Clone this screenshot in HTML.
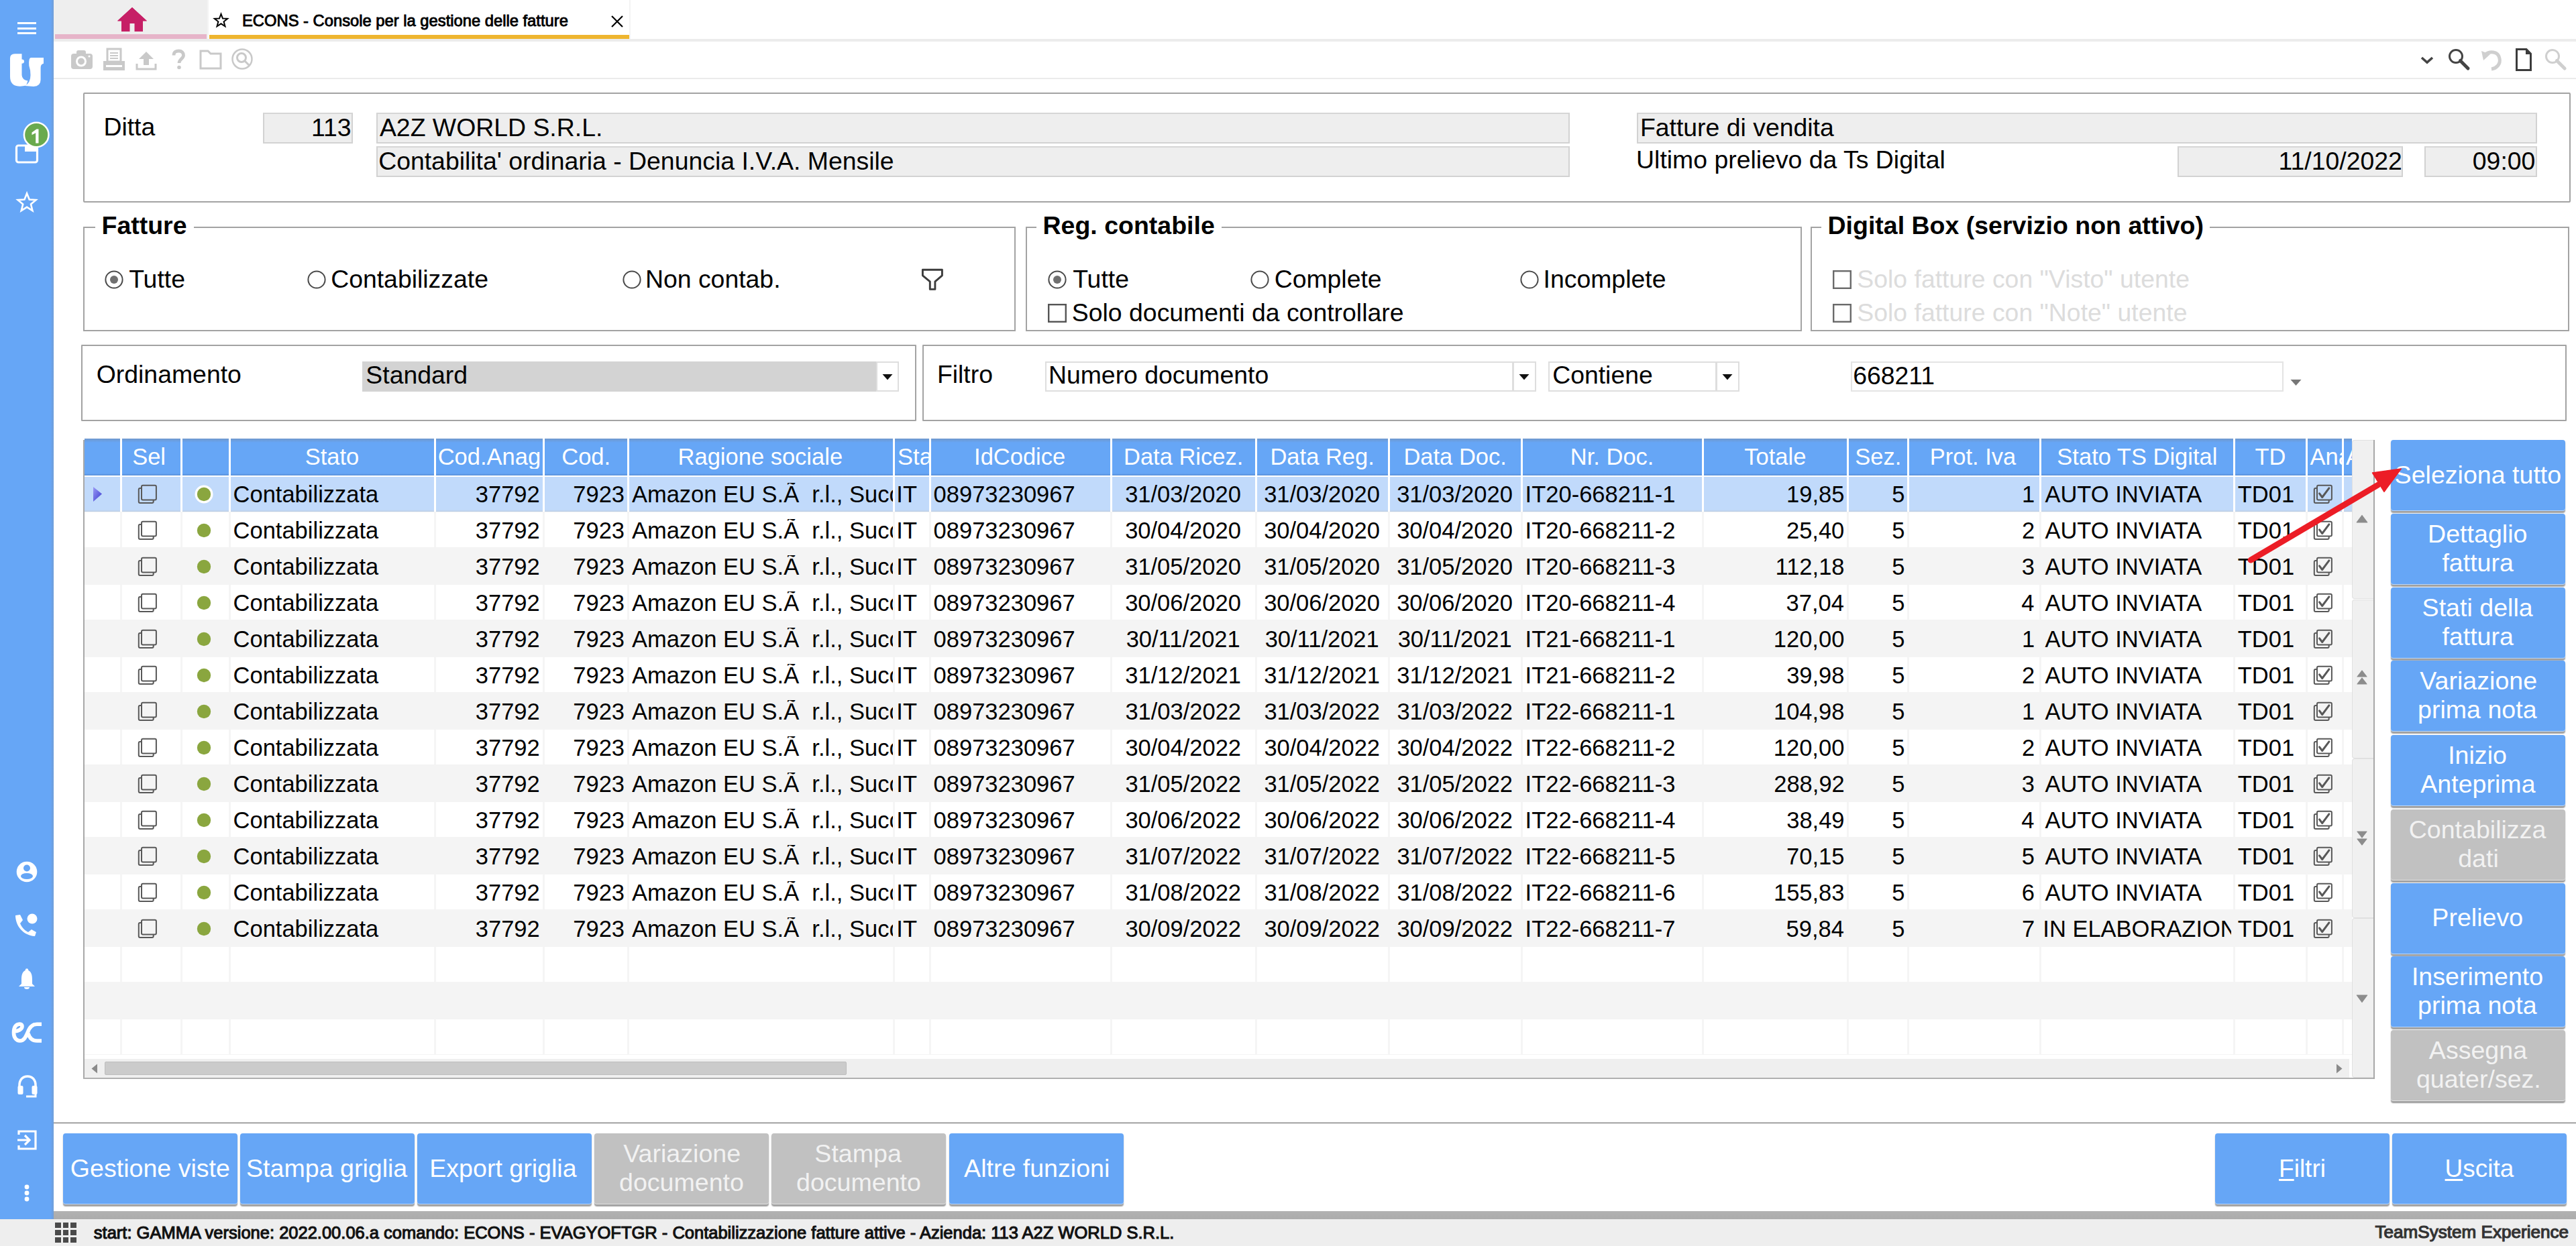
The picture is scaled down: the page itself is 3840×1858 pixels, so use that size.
<!DOCTYPE html>
<html><head><meta charset="utf-8"><title>ECONS</title>
<style>
html,body{margin:0;padding:0;}
body{width:3840px;height:1858px;position:relative;overflow:hidden;background:#fff;font-family:"Liberation Sans", sans-serif;}
.t{position:absolute;white-space:pre;}
.r{position:absolute;box-sizing:border-box;}
</style></head><body>

<div class="r" style="left:0.00px;top:0.00px;width:80.00px;height:1818.00px;background:#66a6f6;"></div>
<div class="r" style="left:75.00px;top:0.00px;width:5.00px;height:1818.00px;background:linear-gradient(to right, rgba(100,165,245,0), rgba(120,150,190,0.55));"></div>
<div class="r" style="left:26.00px;top:33.00px;width:28.00px;height:3.00px;background:#fff;"></div>
<div class="r" style="left:26.00px;top:40.50px;width:28.00px;height:3.00px;background:#fff;"></div>
<div class="r" style="left:26.00px;top:48.00px;width:28.00px;height:3.00px;background:#fff;"></div>
<svg class="r" style="left:0px;top:70px;" width="80" height="70" viewBox="0 0 80 70"><g transform="translate(0,-70)" fill="#fff">
<path d="M15,87 Q15,80.3 22,80.3 L32.5,80.3 L32.5,88.5 Q36,88.5 36,91.5 Q36,94.7 32.5,94.7 L32.5,112 Q33,119 41.5,120.5 L39,127.5 Q33,129 27,128.5 Q15,127.5 15,114 Z"/>
<path d="M46,86 L65,86 L65,94.7 Q60.6,95.5 60.6,101 L60.6,119 Q60.6,128.5 50,129 L37.5,128 Q45.5,123 45.5,112 Q45.5,104 43.3,98 Q42.5,86 46,86 Z"/>
</g></svg>
<svg class="r" style="left:18px;top:178px;" width="62" height="72" viewBox="0 0 62 72"><rect x="6.5" y="39" width="31" height="25" rx="3" ry="3" fill="none" stroke="#fff" stroke-width="3.2"/>
<rect x="19" y="38" width="20" height="10" fill="#fff"/>
<circle cx="36.2" cy="23" r="18.3" fill="#6aaa4e" stroke="#fff" stroke-width="2.5"/>
<path d="M29.5,19.5 L36.5,14.5 L39.5,14.5 L39.5,35.4 L35.2,35.4 L35.2,20.3 L29.5,23.2 Z" fill="#fff"/></svg>
<svg class="r" style="left:20px;top:282px;" width="40" height="40" viewBox="0 0 40 40"><polygon points="20.10,6.40 23.74,15.58 33.61,16.21 26.00,22.52 28.45,32.09 20.10,26.80 11.75,32.09 14.20,22.52 6.59,16.21 16.46,15.58" fill="none" stroke="#fff" stroke-width="2.6" stroke-linejoin="miter"/></svg>
<svg class="r" style="left:24px;top:1284px;" width="32" height="32" viewBox="0 0 32 32"><circle cx="16" cy="16" r="15.3" fill="#fff"/>
<circle cx="16" cy="10.5" r="5" fill="#66a6f6"/>
<ellipse cx="16" cy="22.5" rx="9" ry="4.6" fill="#66a6f6"/></svg>
<svg class="r" style="left:20px;top:1360px;" width="40" height="40" viewBox="0 0 40 40"><circle cx="28" cy="10" r="7.5" fill="#fff"/>
<path d="M3 5 C3 20 14 35 32 36 L34 30 L27 26 L22 30 C16 27 12 22 10 17 L14 12 L10 4 Z" fill="#fff"/></svg>
<svg class="r" style="left:26px;top:1443px;" width="28" height="34" viewBox="0 0 28 34"><path d="M14 3 C7 5 6 11 6 18 L6 24 L2 28 L26 28 L22 24 L22 18 C22 11 21 5 14 3 Z" fill="#fff"/>
<circle cx="14" cy="3.5" r="2.2" fill="#fff"/><path d="M10 29 a4 3 0 0 0 8 0 Z" fill="#fff"/></svg>
<svg class="r" style="left:0px;top:1510px;" width="80" height="60" viewBox="0 0 80 60"><path d="M21.5,28 C27,27.5 33,25 33,20.5 C33,17.5 30.5,16.8 28,17.2 C23,18 20.5,23 20.5,30 C20.5,37.5 24.5,42 29.5,42 C36,42 38.5,36 41.5,29 C44,22 48,17.3 55,17.3 L62,17.3" fill="none" stroke="#fff" stroke-width="5.6"/>
<path d="M42,31 C44,38 48,42 55,42 L62,42" fill="none" stroke="#fff" stroke-width="5.6"/></svg>
<svg class="r" style="left:24px;top:1601px;" width="34" height="40" viewBox="0 0 34 40"><path d="M5 22 L5 17 C5 9 10 4 17 4 C24 4 29 9 29 17 L29 22" fill="none" stroke="#fff" stroke-width="3.5"/>
<rect x="2.5" y="18" width="8" height="13" rx="2" fill="#fff"/><rect x="23.5" y="18" width="8" height="13" rx="2" fill="#fff"/>
<path d="M29 29 L29 34 L15 34" fill="none" stroke="#fff" stroke-width="3"/></svg>
<svg class="r" style="left:24px;top:1683px;" width="34" height="34" viewBox="0 0 34 34"><path d="M4 9 L4 4 L29 4 L29 30 L4 30 L4 25" fill="none" stroke="#fff" stroke-width="3.2"/>
<path d="M2 17 L19 17 M13 10 L20 17 L13 24" fill="none" stroke="#fff" stroke-width="3.2"/></svg>
<svg class="r" style="left:36px;top:1766px;" width="8" height="8" viewBox="0 0 8 8"><circle cx="4" cy="4" r="3.4" fill="#fff"/></svg>
<svg class="r" style="left:36px;top:1775px;" width="8" height="8" viewBox="0 0 8 8"><circle cx="4" cy="4" r="3.4" fill="#fff"/></svg>
<svg class="r" style="left:36px;top:1784px;" width="8" height="8" viewBox="0 0 8 8"><circle cx="4" cy="4" r="3.4" fill="#fff"/></svg>
<div class="r" style="left:80.00px;top:0.00px;width:229.00px;height:58.00px;background:#eeeeee;"></div>
<div class="r" style="left:82.00px;top:51.00px;width:226.00px;height:7.00px;background:#e6b4c9;"></div>
<svg class="r" style="left:172px;top:8px;" width="50" height="42" viewBox="0 0 50 42"><polygon points="3,23 25,3 47,23 41,23 41,39 29,39 29,27 21,39 21,39 9,39 9,23" fill="#c61f66"/>
<polygon points="3,23.5 25,3 47,23.5" fill="#c61f66"/>
<rect x="9" y="22" width="32" height="17" fill="#c61f66"/>
<rect x="21.5" y="27" width="7" height="12" fill="#eeeeee"/></svg>
<div class="r" style="left:309.00px;top:0.00px;width:2.00px;height:58.00px;background:#f4f4f4;"></div>
<div class="r" style="left:312.00px;top:52.00px;width:626.00px;height:6.00px;background:#eeb52f;"></div>
<div class="r" style="left:938.00px;top:0.00px;width:2.00px;height:58.00px;background:#f3f3f3;"></div>
<div class="r" style="left:80.00px;top:58.00px;width:3760.00px;height:4.00px;background:#ececec;"></div>
<svg class="r" style="left:316px;top:17px;" width="28" height="26" viewBox="0 0 28 26"><polygon points="13.50,3.80 16.03,10.52 23.20,10.85 17.59,15.33 19.50,22.25 13.50,18.30 7.50,22.25 9.41,15.33 3.80,10.85 10.97,10.52" fill="none" stroke="#000" stroke-width="2" stroke-linejoin="miter"/></svg>
<div class="t" style="top:18.90px;font-size:23.75px;line-height:23.75px;height:23.75px;color:#000;left:361.04px;-webkit-text-stroke:0.9px #000;">ECONS - Console per la gestione delle fatture</div>
<svg class="r" style="left:908px;top:20px;" width="24" height="24" viewBox="0 0 24 24"><path d="M4 4 L20 20 M20 4 L4 20" stroke="#000" stroke-width="2.2"/></svg>
<div class="r" style="left:80.00px;top:116.00px;width:3760.00px;height:2.00px;background:#ebebeb;"></div>
<svg class="r" style="left:104px;top:72px;" width="36" height="34" viewBox="0 0 36 34"><rect x="2" y="8" width="32" height="23" rx="4" fill="#c9c9c9"/><rect x="10" y="3" width="14" height="8" rx="3" fill="#c9c9c9"/>
<circle cx="17" cy="19.5" r="8" fill="#fff"/><circle cx="17" cy="19.5" r="5" fill="#c9c9c9"/><circle cx="29" cy="12" r="1.5" fill="#fff"/></svg>
<svg class="r" style="left:152px;top:71px;" width="36" height="36" viewBox="0 0 36 36"><rect x="8" y="2" width="20" height="19" fill="none" stroke="#c9c9c9" stroke-width="3"/>
<path d="M12 8 H24 M12 12 H24 M12 16 H24" stroke="#c9c9c9" stroke-width="2"/>
<rect x="2" y="20" width="32" height="14" fill="#c9c9c9"/><rect x="6" y="26" width="24" height="3" fill="#fff"/></svg>
<svg class="r" style="left:200px;top:72px;" width="36" height="36" viewBox="0 0 36 36"><path d="M18 5 L7 16 L14 16 L14 25 L22 25 L22 16 L29 16 Z" fill="#c9c9c9"/>
<path d="M4 23 L4 31 L32 31 L32 23" fill="none" stroke="#c9c9c9" stroke-width="3"/></svg>
<svg class="r" style="left:252px;top:72px;" width="28" height="34" viewBox="0 0 28 34"><path d="M7 10.5 C7 5 10.5 4 14.5 4 C19 4 21.5 6.5 21.5 10.5 C21.5 15.5 15 16 15 22" fill="none" stroke="#c9c9c9" stroke-width="4.8"/>
<circle cx="15" cy="28.5" r="2.8" fill="#c9c9c9"/></svg>
<svg class="r" style="left:296px;top:72px;" width="36" height="34" viewBox="0 0 36 34"><path d="M3 4 L14 4 L18 8 L33 8 L33 30 L3 30 Z" fill="none" stroke="#c9c9c9" stroke-width="3"/></svg>
<svg class="r" style="left:344px;top:71px;" width="36" height="36" viewBox="0 0 36 36"><circle cx="17" cy="17" r="14.5" fill="none" stroke="#c9c9c9" stroke-width="2.5"/>
<circle cx="16" cy="15" r="6.5" fill="none" stroke="#c9c9c9" stroke-width="3"/><path d="M21 20 L28 27" stroke="#c9c9c9" stroke-width="3"/></svg>
<svg class="r" style="left:3606px;top:82px;" width="24" height="16" viewBox="0 0 24 16"><path d="M4 4 L12 11 L20 4" fill="none" stroke="#444" stroke-width="3.6"/></svg>
<svg class="r" style="left:3648px;top:71px;" width="36" height="36" viewBox="0 0 36 36"><circle cx="13" cy="13" r="9.5" fill="none" stroke="#444" stroke-width="3"/><path d="M19.5 19.5 L31 31" stroke="#444" stroke-width="5" stroke-linecap="round"/></svg>
<svg class="r" style="left:3696px;top:72px;" width="36" height="34" viewBox="0 0 36 34"><path d="M9 9 C15 4 28 4 30 15 C32 24 25 30 18 31" fill="none" stroke="#cfcfcf" stroke-width="5"/>
<polygon points="3,4 16,9 6,18" fill="#cfcfcf"/></svg>
<svg class="r" style="left:3748px;top:71px;" width="28" height="36" viewBox="0 0 28 36"><path d="M3.5 2.5 L18 2.5 L24.5 9 L24.5 33.5 L3.5 33.5 Z" fill="none" stroke="#3c3c3c" stroke-width="3"/><polygon points="17,2 25,10 17,10" fill="#3c3c3c"/></svg>
<svg class="r" style="left:3792px;top:71px;" width="36" height="36" viewBox="0 0 36 36"><circle cx="13" cy="13" r="9.5" fill="none" stroke="#cfcfcf" stroke-width="3"/><path d="M19.5 19.5 L31 31" stroke="#cfcfcf" stroke-width="5" stroke-linecap="round"/></svg>
<div class="r" style="left:124.00px;top:138.00px;width:3708.00px;height:164.00px;border:2px solid #a3a3a3;border-radius:2px;"></div>
<div class="t" style="top:170.84px;font-size:37.4px;line-height:37.4px;height:37.4px;color:#000;left:154.41px;">Ditta</div>
<div class="r" style="left:392.00px;top:168.00px;width:134.00px;height:46.00px;background:#eeeeee;border:2px solid #d2d2d2;border-top-color:#d6d6d6;"></div>
<div class="t" style="top:172.34px;font-size:37.4px;line-height:37.4px;height:37.4px;color:#000;left:393.66px;width:130.00px;text-align:right;">113</div>
<div class="r" style="left:561.00px;top:168.00px;width:1779.00px;height:46.00px;background:#eeeeee;border:2px solid #d2d2d2;border-top-color:#d6d6d6;"></div>
<div class="t" style="top:172.34px;font-size:37.4px;line-height:37.4px;height:37.4px;color:#000;left:565.91px;">A2Z WORLD S.R.L.</div>
<div class="r" style="left:561.00px;top:218.00px;width:1779.00px;height:46.00px;background:#eeeeee;border:2px solid #d2d2d2;border-top-color:#d6d6d6;"></div>
<div class="t" style="top:221.84px;font-size:37.4px;line-height:37.4px;height:37.4px;color:#000;left:564.13px;">Contabilita' ordinaria - Denuncia I.V.A. Mensile</div>
<div class="r" style="left:2440.00px;top:168.00px;width:1342.00px;height:46.00px;background:#eeeeee;border:2px solid #d2d2d2;border-top-color:#d6d6d6;"></div>
<div class="t" style="top:172.34px;font-size:37.4px;line-height:37.4px;height:37.4px;color:#000;left:2444.91px;">Fatture di vendita</div>
<div class="t" style="top:220.34px;font-size:37.4px;line-height:37.4px;height:37.4px;color:#000;left:2439.10px;">Ultimo prelievo da Ts Digital</div>
<div class="r" style="left:3246.00px;top:218.00px;width:336.00px;height:46.00px;background:#eeeeee;border:2px solid #d2d2d2;border-top-color:#d6d6d6;"></div>
<div class="t" style="top:222.34px;font-size:37.4px;line-height:37.4px;height:37.4px;color:#000;left:3280.90px;width:300.00px;text-align:right;">11/10/2022</div>
<div class="r" style="left:3614.00px;top:218.00px;width:168.00px;height:46.00px;background:#eeeeee;border:2px solid #d2d2d2;border-top-color:#d6d6d6;"></div>
<div class="t" style="top:222.34px;font-size:37.4px;line-height:37.4px;height:37.4px;color:#000;left:3619.40px;width:160.00px;text-align:right;">09:00</div>
<div class="r" style="left:124.00px;top:338.00px;width:2.00px;height:156.00px;background:#a3a3a3;"></div>
<div class="r" style="left:1512.00px;top:338.00px;width:2.00px;height:156.00px;background:#a3a3a3;"></div>
<div class="r" style="left:124.00px;top:492.00px;width:1390.00px;height:2.00px;background:#a3a3a3;"></div>
<div class="r" style="left:124.00px;top:338.00px;width:18.00px;height:2.00px;background:#a3a3a3;"></div>
<div class="r" style="left:289.00px;top:338.00px;width:1225.00px;height:2.00px;background:#a3a3a3;"></div>
<div class="t" style="top:318.26px;font-size:37.5px;line-height:37.5px;height:37.5px;color:#000;font-weight:700;left:151.47px;">Fatture</div>
<div class="r" style="left:1529.00px;top:338.00px;width:2.00px;height:156.00px;background:#a3a3a3;"></div>
<div class="r" style="left:2684.00px;top:338.00px;width:2.00px;height:156.00px;background:#a3a3a3;"></div>
<div class="r" style="left:1529.00px;top:492.00px;width:1157.00px;height:2.00px;background:#a3a3a3;"></div>
<div class="r" style="left:1529.00px;top:338.00px;width:16.00px;height:2.00px;background:#a3a3a3;"></div>
<div class="r" style="left:1821.00px;top:338.00px;width:865.00px;height:2.00px;background:#a3a3a3;"></div>
<div class="t" style="top:318.26px;font-size:37.5px;line-height:37.5px;height:37.5px;color:#000;font-weight:700;left:1554.47px;">Reg. contabile</div>
<div class="r" style="left:2699.00px;top:338.00px;width:2.00px;height:156.00px;background:#a3a3a3;"></div>
<div class="r" style="left:3828.00px;top:338.00px;width:2.00px;height:156.00px;background:#a3a3a3;"></div>
<div class="r" style="left:2699.00px;top:492.00px;width:1131.00px;height:2.00px;background:#a3a3a3;"></div>
<div class="r" style="left:2699.00px;top:338.00px;width:16.00px;height:2.00px;background:#a3a3a3;"></div>
<div class="r" style="left:3294.00px;top:338.00px;width:536.00px;height:2.00px;background:#a3a3a3;"></div>
<div class="t" style="top:318.26px;font-size:37.5px;line-height:37.5px;height:37.5px;color:#000;font-weight:700;left:2724.47px;">Digital Box (servizio non attivo)</div>
<svg class="r" style="left:156.0px;top:402.5px;" width="28" height="28" viewBox="0 0 28 28"><circle cx="14" cy="14" r="12.6" fill="#fff" stroke="#4a4a4a" stroke-width="2"/><circle cx="14" cy="14" r="6" fill="#707070"/></svg>
<div class="t" style="top:398.34px;font-size:37.4px;line-height:37.4px;height:37.4px;color:#000;left:192.16px;">Tutte</div>
<svg class="r" style="left:457.5px;top:402.5px;" width="28" height="28" viewBox="0 0 28 28"><circle cx="14" cy="14" r="12.6" fill="#fff" stroke="#4a4a4a" stroke-width="2"/></svg>
<div class="t" style="top:398.34px;font-size:37.4px;line-height:37.4px;height:37.4px;color:#000;left:493.13px;">Contabilizzate</div>
<svg class="r" style="left:927.5px;top:402.5px;" width="28" height="28" viewBox="0 0 28 28"><circle cx="14" cy="14" r="12.6" fill="#fff" stroke="#4a4a4a" stroke-width="2"/></svg>
<div class="t" style="top:398.34px;font-size:37.4px;line-height:37.4px;height:37.4px;color:#000;left:961.91px;">Non contab.</div>
<svg class="r" style="left:1372px;top:399px;" width="36" height="36" viewBox="0 0 36 36"><path d="M3.4 3.2 L32.4 3.2 L32.4 11.8 L21.9 20.8 L21.9 32.4 L14.3 32.4 L14.3 20.8 L3.4 11.8 Z" fill="#fff" stroke="#3c3c3c" stroke-width="2.9" stroke-linejoin="round"/></svg>
<svg class="r" style="left:1561.5px;top:402.5px;" width="28" height="28" viewBox="0 0 28 28"><circle cx="14" cy="14" r="12.6" fill="#fff" stroke="#4a4a4a" stroke-width="2"/><circle cx="14" cy="14" r="6" fill="#707070"/></svg>
<div class="t" style="top:398.34px;font-size:37.4px;line-height:37.4px;height:37.4px;color:#000;left:1599.16px;">Tutte</div>
<svg class="r" style="left:1863.5px;top:402.5px;" width="28" height="28" viewBox="0 0 28 28"><circle cx="14" cy="14" r="12.6" fill="#fff" stroke="#4a4a4a" stroke-width="2"/></svg>
<div class="t" style="top:398.34px;font-size:37.4px;line-height:37.4px;height:37.4px;color:#000;left:1899.63px;">Complete</div>
<svg class="r" style="left:2266.0px;top:402.5px;" width="28" height="28" viewBox="0 0 28 28"><circle cx="14" cy="14" r="12.6" fill="#fff" stroke="#4a4a4a" stroke-width="2"/></svg>
<div class="t" style="top:398.34px;font-size:37.4px;line-height:37.4px;height:37.4px;color:#000;left:2300.54px;">Incomplete</div>
<svg class="r" style="left:1562px;top:453px;" width="28" height="28" viewBox="0 0 28 28"><rect x="1.2" y="1.2" width="25.6" height="25.6" fill="#fff" stroke="#555" stroke-width="2.4"/></svg>
<div class="t" style="top:448.34px;font-size:37.4px;line-height:37.4px;height:37.4px;color:#000;left:1597.82px;">Solo documenti da controllare</div>
<svg class="r" style="left:2732px;top:403px;" width="28" height="28" viewBox="0 0 28 28"><rect x="1.2" y="1.2" width="25.6" height="25.6" fill="#fff" stroke="#6a6a6a" stroke-width="2.4"/></svg>
<div class="t" style="top:398.34px;font-size:37.4px;line-height:37.4px;height:37.4px;color:#dcdcdc;left:2768.32px;">Solo fatture con "Visto" utente</div>
<svg class="r" style="left:2732px;top:453px;" width="28" height="28" viewBox="0 0 28 28"><rect x="1.2" y="1.2" width="25.6" height="25.6" fill="#fff" stroke="#6a6a6a" stroke-width="2.4"/></svg>
<div class="t" style="top:448.34px;font-size:37.4px;line-height:37.4px;height:37.4px;color:#dcdcdc;left:2768.32px;">Solo fatture con "Note" utente</div>
<div class="r" style="left:121.00px;top:514.00px;width:1245.00px;height:114.00px;border:2px solid #a3a3a3;border-radius:1px;"></div>
<div class="t" style="top:540.34px;font-size:37.4px;line-height:37.4px;height:37.4px;color:#000;left:143.72px;">Ordinamento</div>
<div class="r" style="left:539.50px;top:538.50px;width:766.50px;height:45.50px;background:#d3d3d3;"></div>
<div class="t" style="top:541.34px;font-size:37.4px;line-height:37.4px;height:37.4px;color:#000;left:545.32px;">Standard</div>
<div class="r" style="left:1306.00px;top:538.50px;width:34.00px;height:45.50px;background:#fff;border:2px solid #dedede;"></div>
<svg class="r" style="left:1314px;top:556px;" width="18" height="12" viewBox="0 0 18 12"><polygon points="1.5,2 16.5,2 9,10.5" fill="#111"/></svg>
<div class="r" style="left:1374.50px;top:514.00px;width:2451.50px;height:114.00px;border:2px solid #a3a3a3;border-radius:1px;"></div>
<div class="t" style="top:540.34px;font-size:37.4px;line-height:37.4px;height:37.4px;color:#000;left:1396.91px;">Filtro</div>
<div class="r" style="left:1558.00px;top:538.50px;width:698.00px;height:45.50px;background:#fff;border:2px solid #dedede;"></div>
<div class="t" style="top:541.34px;font-size:37.4px;line-height:37.4px;height:37.4px;color:#000;left:1562.91px;">Numero documento</div>
<div class="r" style="left:2254.50px;top:538.50px;width:35.00px;height:45.50px;background:#fff;border:2px solid #dedede;"></div>
<svg class="r" style="left:2263px;top:556px;" width="18" height="12" viewBox="0 0 18 12"><polygon points="1.5,2 16.5,2 9,10.5" fill="#111"/></svg>
<div class="r" style="left:2308.00px;top:538.50px;width:251.00px;height:45.50px;background:#fff;border:2px solid #dedede;"></div>
<div class="t" style="top:541.34px;font-size:37.4px;line-height:37.4px;height:37.4px;color:#000;left:2314.13px;">Contiene</div>
<div class="r" style="left:2557.50px;top:538.50px;width:35.50px;height:45.50px;background:#fff;border:2px solid #dedede;"></div>
<svg class="r" style="left:2566px;top:556px;" width="18" height="12" viewBox="0 0 18 12"><polygon points="1.5,2 16.5,2 9,10.5" fill="#111"/></svg>
<div class="r" style="left:2758.50px;top:538.50px;width:645.00px;height:45.50px;background:#fff;border:2px solid #e4e4e4;"></div>
<div class="t" style="top:541.84px;font-size:37.4px;line-height:37.4px;height:37.4px;color:#000;left:2762.13px;">668211</div>
<svg class="r" style="left:3413px;top:564px;" width="20" height="13" viewBox="0 0 20 13"><polygon points="1.5,2 17.5,2 9.5,11" fill="#777"/></svg>
<div class="r" style="left:124.00px;top:654.00px;width:3416.00px;height:955.00px;background:#fff;"></div>
<div class="r" style="left:124.00px;top:656.00px;width:2.00px;height:953.00px;background:#a8a8a8;"></div>
<div class="r" style="left:124.00px;top:1607.00px;width:3416.00px;height:2.00px;background:#b0b0b0;"></div>
<div class="r" style="left:3538.00px;top:656.00px;width:2.00px;height:953.00px;background:#a8a8a8;"></div>
<div class="r" style="left:126.00px;top:654.00px;width:3380.00px;height:55.00px;background:#66a6f6;"></div>
<div class="r" style="left:126.00px;top:654.00px;width:3380.00px;height:6.00px;background:linear-gradient(rgba(120,140,170,0.55), rgba(100,165,245,0));"></div>
<div class="r" style="left:126.00px;top:706.00px;width:3380.00px;height:3.00px;background:linear-gradient(rgba(80,130,200,0), rgba(80,130,200,0.7));"></div>
<div class="t" style="top:664.30px;font-size:34.5px;line-height:34.5px;height:34.5px;color:#fff;left:178.59px;width:87.00px;text-align:center;">Sel</div>
<div class="t" style="top:664.30px;font-size:34.5px;line-height:34.5px;height:34.5px;color:#fff;left:343.41px;width:303.00px;text-align:center;">Stato</div>
<div class="t" style="left:650px;top:664.30px;width:159px;height:34.5px;overflow:hidden;font-size:34.5px;line-height:34.5px;color:#fff;"><span style="position:relative;left:2.67px">Cod.Anag</span></div>
<div class="t" style="top:664.30px;font-size:34.5px;line-height:34.5px;height:34.5px;color:#fff;left:812.19px;width:123.00px;text-align:center;">Cod.</div>
<div class="t" style="top:664.30px;font-size:34.5px;line-height:34.5px;height:34.5px;color:#fff;left:936.83px;width:393.00px;text-align:center;">Ragione sociale</div>
<div class="t" style="left:1334px;top:664.30px;width:51px;height:34.5px;overflow:hidden;font-size:34.5px;line-height:34.5px;color:#fff;"><span style="position:relative;left:4.05px">Stato</span></div>
<div class="t" style="top:664.30px;font-size:34.5px;line-height:34.5px;height:34.5px;color:#fff;left:1386.67px;width:267.00px;text-align:center;">IdCodice</div>
<div class="t" style="top:664.30px;font-size:34.5px;line-height:34.5px;height:34.5px;color:#fff;left:1657.65px;width:213.00px;text-align:center;">Data Ricez.</div>
<div class="t" style="top:664.30px;font-size:34.5px;line-height:34.5px;height:34.5px;color:#fff;left:1873.63px;width:195.00px;text-align:center;">Data Reg.</div>
<div class="t" style="top:664.30px;font-size:34.5px;line-height:34.5px;height:34.5px;color:#fff;left:2071.65px;width:195.00px;text-align:center;">Data Doc.</div>
<div class="t" style="top:664.30px;font-size:34.5px;line-height:34.5px;height:34.5px;color:#fff;left:2269.62px;width:267.00px;text-align:center;">Nr. Doc.</div>
<div class="t" style="top:664.30px;font-size:34.5px;line-height:34.5px;height:34.5px;color:#fff;left:2539.86px;width:213.00px;text-align:center;">Totale</div>
<div class="t" style="top:664.30px;font-size:34.5px;line-height:34.5px;height:34.5px;color:#fff;left:2756.29px;width:87.00px;text-align:center;">Sez.</div>
<div class="t" style="top:664.30px;font-size:34.5px;line-height:34.5px;height:34.5px;color:#fff;left:2844.06px;width:194.00px;text-align:center;">Prot. Iva</div>
<div class="t" style="top:664.30px;font-size:34.5px;line-height:34.5px;height:34.5px;color:#fff;left:3042.88px;width:286.00px;text-align:center;">Stato TS Digital</div>
<div class="t" style="top:664.30px;font-size:34.5px;line-height:34.5px;height:34.5px;color:#fff;left:3331.94px;width:105.00px;text-align:center;">TD</div>
<div class="t" style="left:3440px;top:664.30px;width:51px;height:34.5px;overflow:hidden;font-size:34.5px;line-height:34.5px;color:#fff;"><span style="position:relative;left:3.51px">Analitica</span></div>
<div class="t" style="left:3494px;top:664.30px;width:12px;height:34.5px;overflow:hidden;font-size:34.5px;line-height:34.5px;color:#fff;"><span style="position:relative;left:2.91px">Altro</span></div>
<div class="r" style="left:179.00px;top:654.00px;width:3.00px;height:55.00px;background:#fff;"></div>
<div class="r" style="left:269.00px;top:654.00px;width:3.00px;height:55.00px;background:#fff;"></div>
<div class="r" style="left:341.00px;top:654.00px;width:3.00px;height:55.00px;background:#fff;"></div>
<div class="r" style="left:647.00px;top:654.00px;width:3.00px;height:55.00px;background:#fff;"></div>
<div class="r" style="left:809.00px;top:654.00px;width:3.00px;height:55.00px;background:#fff;"></div>
<div class="r" style="left:935.00px;top:654.00px;width:3.00px;height:55.00px;background:#fff;"></div>
<div class="r" style="left:1331.00px;top:654.00px;width:3.00px;height:55.00px;background:#fff;"></div>
<div class="r" style="left:1385.00px;top:654.00px;width:3.00px;height:55.00px;background:#fff;"></div>
<div class="r" style="left:1655.00px;top:654.00px;width:3.00px;height:55.00px;background:#fff;"></div>
<div class="r" style="left:1871.00px;top:654.00px;width:3.00px;height:55.00px;background:#fff;"></div>
<div class="r" style="left:2069.00px;top:654.00px;width:3.00px;height:55.00px;background:#fff;"></div>
<div class="r" style="left:2267.00px;top:654.00px;width:3.00px;height:55.00px;background:#fff;"></div>
<div class="r" style="left:2537.00px;top:654.00px;width:3.00px;height:55.00px;background:#fff;"></div>
<div class="r" style="left:2753.00px;top:654.00px;width:3.00px;height:55.00px;background:#fff;"></div>
<div class="r" style="left:2843.00px;top:654.00px;width:3.00px;height:55.00px;background:#fff;"></div>
<div class="r" style="left:3040.00px;top:654.00px;width:3.00px;height:55.00px;background:#fff;"></div>
<div class="r" style="left:3329.00px;top:654.00px;width:3.00px;height:55.00px;background:#fff;"></div>
<div class="r" style="left:3437.00px;top:654.00px;width:3.00px;height:55.00px;background:#fff;"></div>
<div class="r" style="left:3491.00px;top:654.00px;width:3.00px;height:55.00px;background:#fff;"></div>
<div class="r" style="left:126.00px;top:709.00px;width:3380.00px;height:54.00px;background:#c1dafb;"></div>
<div class="r" style="left:126.00px;top:709.00px;width:3380.00px;height:2.00px;background:#fff;"></div>
<div class="r" style="left:126.00px;top:760.00px;width:3380.00px;height:3.00px;background:linear-gradient(rgba(190,205,225,0), rgba(190,205,225,0.9));"></div>
<div class="r" style="left:179.00px;top:709.00px;width:3.00px;height:54.00px;background:#fff;"></div>
<div class="r" style="left:269.00px;top:709.00px;width:3.00px;height:54.00px;background:#fff;"></div>
<div class="r" style="left:341.00px;top:709.00px;width:3.00px;height:54.00px;background:#fff;"></div>
<div class="r" style="left:647.00px;top:709.00px;width:3.00px;height:54.00px;background:#fff;"></div>
<div class="r" style="left:809.00px;top:709.00px;width:3.00px;height:54.00px;background:#fff;"></div>
<div class="r" style="left:935.00px;top:709.00px;width:3.00px;height:54.00px;background:#fff;"></div>
<div class="r" style="left:1331.00px;top:709.00px;width:3.00px;height:54.00px;background:#fff;"></div>
<div class="r" style="left:1385.00px;top:709.00px;width:3.00px;height:54.00px;background:#fff;"></div>
<div class="r" style="left:1655.00px;top:709.00px;width:3.00px;height:54.00px;background:#fff;"></div>
<div class="r" style="left:1871.00px;top:709.00px;width:3.00px;height:54.00px;background:#fff;"></div>
<div class="r" style="left:2069.00px;top:709.00px;width:3.00px;height:54.00px;background:#fff;"></div>
<div class="r" style="left:2267.00px;top:709.00px;width:3.00px;height:54.00px;background:#fff;"></div>
<div class="r" style="left:2537.00px;top:709.00px;width:3.00px;height:54.00px;background:#fff;"></div>
<div class="r" style="left:2753.00px;top:709.00px;width:3.00px;height:54.00px;background:#fff;"></div>
<div class="r" style="left:2843.00px;top:709.00px;width:3.00px;height:54.00px;background:#fff;"></div>
<div class="r" style="left:3040.00px;top:709.00px;width:3.00px;height:54.00px;background:#fff;"></div>
<div class="r" style="left:3329.00px;top:709.00px;width:3.00px;height:54.00px;background:#fff;"></div>
<div class="r" style="left:3437.00px;top:709.00px;width:3.00px;height:54.00px;background:#fff;"></div>
<div class="r" style="left:3491.00px;top:709.00px;width:3.00px;height:54.00px;background:#fff;"></div>
<svg class="r" style="left:137px;top:725px;" width="18" height="24" viewBox="0 0 18 24"><defs><linearGradient id="ag" x1="0" x2="1" y1="0" y2="1"><stop offset="0" stop-color="#9a9af5"/><stop offset="1" stop-color="#3a3ad0"/></linearGradient></defs>
<polygon points="2,1 15,11.5 2,23" fill="url(#ag)"/></svg>
<svg class="r" style="left:204px;top:722px;" width="32" height="32" viewBox="0 0 32 32"><path d="M7 6 L4.8 6 Q2.8 6 2.8 8 L2.8 25.9 Q2.8 27.9 4.8 27.9 L22.7 27.9 Q24.7 27.9 24.7 25.9 L24.7 23.5" fill="none" stroke="#585858" stroke-width="2"/><rect x="7" y="1.8" width="21.9" height="21.7" rx="2" ry="2" fill="none" stroke="#585858" stroke-width="2"/></svg>
<svg class="r" style="left:290px;top:723px;" width="28" height="28" viewBox="0 0 28 28"><circle cx="14" cy="14" r="13.5" fill="#fff"/><circle cx="14" cy="14" r="10.2" fill="#8aa63f"/></svg>
<div class="t" style="top:720.00px;font-size:34.5px;line-height:34.5px;height:34.5px;color:#000;left:347.57px;">Contabilizzata</div>
<div class="t" style="top:720.00px;font-size:34.5px;line-height:34.5px;height:34.5px;color:#000;left:654.75px;width:150.00px;text-align:right;">37792</div>
<div class="t" style="top:720.00px;font-size:34.5px;line-height:34.5px;height:34.5px;color:#000;left:821.04px;width:110.00px;text-align:right;">7923</div>
<div class="t" style="top:720.00px;font-size:34.5px;line-height:34.5px;height:34.5px;color:#000;left:941.91px;width:389.00px;overflow:hidden;">Amazon EU S.Ã  r.l., Succursale Italiana</div>
<div class="t" style="top:720.00px;font-size:34.5px;line-height:34.5px;height:34.5px;color:#000;left:1336.31px;width:45.50px;overflow:hidden;">IT</div>
<div class="t" style="top:720.00px;font-size:34.5px;line-height:34.5px;height:34.5px;color:#000;left:1391.62px;">08973230967</div>
<div class="t" style="top:720.00px;font-size:34.5px;line-height:34.5px;height:34.5px;color:#000;left:1657.00px;width:213.00px;text-align:center;">31/03/2020</div>
<div class="t" style="top:720.00px;font-size:34.5px;line-height:34.5px;height:34.5px;color:#000;left:1873.00px;width:195.00px;text-align:center;">31/03/2020</div>
<div class="t" style="top:720.00px;font-size:34.5px;line-height:34.5px;height:34.5px;color:#000;left:2071.00px;width:195.00px;text-align:center;">31/03/2020</div>
<div class="t" style="top:720.00px;font-size:34.5px;line-height:34.5px;height:34.5px;color:#000;left:2273.61px;">IT20-668211-1</div>
<div class="t" style="top:720.00px;font-size:34.5px;line-height:34.5px;height:34.5px;color:#000;left:2549.38px;width:200.00px;text-align:right;">19,85</div>
<div class="t" style="top:720.00px;font-size:34.5px;line-height:34.5px;height:34.5px;color:#000;left:2759.42px;width:80.00px;text-align:right;">5</div>
<div class="t" style="top:720.00px;font-size:34.5px;line-height:34.5px;height:34.5px;color:#000;left:2853.18px;width:180.00px;text-align:right;">1</div>
<div class="t" style="top:720.00px;font-size:34.5px;line-height:34.5px;height:34.5px;color:#000;left:3048.41px;width:280.50px;overflow:hidden;">AUTO INVIATA</div>
<div class="t" style="top:720.00px;font-size:34.5px;line-height:34.5px;height:34.5px;color:#000;left:3335.72px;">TD01</div>
<svg class="r" style="left:3447.2px;top:722px;" width="32" height="32" viewBox="0 0 32 32"><path d="M7 6 L4.8 6 Q2.8 6 2.8 8 L2.8 25.9 Q2.8 27.9 4.8 27.9 L22.7 27.9 Q24.7 27.9 24.7 25.9 L24.7 23.5" fill="none" stroke="#585858" stroke-width="2"/><rect x="7" y="1.8" width="21.9" height="21.7" rx="2" ry="2" fill="none" stroke="#585858" stroke-width="2"/><path d="M10.5 13.9 L14.7 19.5 L24.9 5.9" fill="none" stroke="#585858" stroke-width="3" stroke-linecap="round" stroke-linejoin="round"/></svg>
<div class="r" style="left:126.00px;top:763.00px;width:3380.00px;height:54.00px;background:#f4f4f4;"></div>
<div class="r" style="left:126.00px;top:764.00px;width:3380.00px;height:52.00px;background:#fff;"></div>
<div class="r" style="left:179.00px;top:764.00px;width:3.00px;height:52.00px;background:#f5f5f5;"></div>
<div class="r" style="left:269.00px;top:764.00px;width:3.00px;height:52.00px;background:#f5f5f5;"></div>
<div class="r" style="left:341.00px;top:764.00px;width:3.00px;height:52.00px;background:#f5f5f5;"></div>
<div class="r" style="left:647.00px;top:764.00px;width:3.00px;height:52.00px;background:#f5f5f5;"></div>
<div class="r" style="left:809.00px;top:764.00px;width:3.00px;height:52.00px;background:#f5f5f5;"></div>
<div class="r" style="left:935.00px;top:764.00px;width:3.00px;height:52.00px;background:#f5f5f5;"></div>
<div class="r" style="left:1331.00px;top:764.00px;width:3.00px;height:52.00px;background:#f5f5f5;"></div>
<div class="r" style="left:1385.00px;top:764.00px;width:3.00px;height:52.00px;background:#f5f5f5;"></div>
<div class="r" style="left:1655.00px;top:764.00px;width:3.00px;height:52.00px;background:#f5f5f5;"></div>
<div class="r" style="left:1871.00px;top:764.00px;width:3.00px;height:52.00px;background:#f5f5f5;"></div>
<div class="r" style="left:2069.00px;top:764.00px;width:3.00px;height:52.00px;background:#f5f5f5;"></div>
<div class="r" style="left:2267.00px;top:764.00px;width:3.00px;height:52.00px;background:#f5f5f5;"></div>
<div class="r" style="left:2537.00px;top:764.00px;width:3.00px;height:52.00px;background:#f5f5f5;"></div>
<div class="r" style="left:2753.00px;top:764.00px;width:3.00px;height:52.00px;background:#f5f5f5;"></div>
<div class="r" style="left:2843.00px;top:764.00px;width:3.00px;height:52.00px;background:#f5f5f5;"></div>
<div class="r" style="left:3040.00px;top:764.00px;width:3.00px;height:52.00px;background:#f5f5f5;"></div>
<div class="r" style="left:3329.00px;top:764.00px;width:3.00px;height:52.00px;background:#f5f5f5;"></div>
<div class="r" style="left:3437.00px;top:764.00px;width:3.00px;height:52.00px;background:#f5f5f5;"></div>
<div class="r" style="left:3491.00px;top:764.00px;width:3.00px;height:52.00px;background:#f5f5f5;"></div>
<svg class="r" style="left:204px;top:776px;" width="32" height="32" viewBox="0 0 32 32"><path d="M7 6 L4.8 6 Q2.8 6 2.8 8 L2.8 25.9 Q2.8 27.9 4.8 27.9 L22.7 27.9 Q24.7 27.9 24.7 25.9 L24.7 23.5" fill="none" stroke="#585858" stroke-width="2"/><rect x="7" y="1.8" width="21.9" height="21.7" rx="2" ry="2" fill="none" stroke="#585858" stroke-width="2"/></svg>
<svg class="r" style="left:290px;top:777px;" width="28" height="28" viewBox="0 0 28 28"><circle cx="14" cy="14" r="10.2" fill="#8aa63f"/></svg>
<div class="t" style="top:774.00px;font-size:34.5px;line-height:34.5px;height:34.5px;color:#000;left:347.57px;">Contabilizzata</div>
<div class="t" style="top:774.00px;font-size:34.5px;line-height:34.5px;height:34.5px;color:#000;left:654.75px;width:150.00px;text-align:right;">37792</div>
<div class="t" style="top:774.00px;font-size:34.5px;line-height:34.5px;height:34.5px;color:#000;left:821.04px;width:110.00px;text-align:right;">7923</div>
<div class="t" style="top:774.00px;font-size:34.5px;line-height:34.5px;height:34.5px;color:#000;left:941.91px;width:389.00px;overflow:hidden;">Amazon EU S.Ã  r.l., Succursale Italiana</div>
<div class="t" style="top:774.00px;font-size:34.5px;line-height:34.5px;height:34.5px;color:#000;left:1336.31px;width:45.50px;overflow:hidden;">IT</div>
<div class="t" style="top:774.00px;font-size:34.5px;line-height:34.5px;height:34.5px;color:#000;left:1391.62px;">08973230967</div>
<div class="t" style="top:774.00px;font-size:34.5px;line-height:34.5px;height:34.5px;color:#000;left:1657.00px;width:213.00px;text-align:center;">30/04/2020</div>
<div class="t" style="top:774.00px;font-size:34.5px;line-height:34.5px;height:34.5px;color:#000;left:1873.00px;width:195.00px;text-align:center;">30/04/2020</div>
<div class="t" style="top:774.00px;font-size:34.5px;line-height:34.5px;height:34.5px;color:#000;left:2071.00px;width:195.00px;text-align:center;">30/04/2020</div>
<div class="t" style="top:774.00px;font-size:34.5px;line-height:34.5px;height:34.5px;color:#000;left:2273.61px;">IT20-668211-2</div>
<div class="t" style="top:774.00px;font-size:34.5px;line-height:34.5px;height:34.5px;color:#000;left:2549.30px;width:200.00px;text-align:right;">25,40</div>
<div class="t" style="top:774.00px;font-size:34.5px;line-height:34.5px;height:34.5px;color:#000;left:2759.42px;width:80.00px;text-align:right;">5</div>
<div class="t" style="top:774.00px;font-size:34.5px;line-height:34.5px;height:34.5px;color:#000;left:2853.27px;width:180.00px;text-align:right;">2</div>
<div class="t" style="top:774.00px;font-size:34.5px;line-height:34.5px;height:34.5px;color:#000;left:3048.41px;width:280.50px;overflow:hidden;">AUTO INVIATA</div>
<div class="t" style="top:774.00px;font-size:34.5px;line-height:34.5px;height:34.5px;color:#000;left:3335.72px;">TD01</div>
<svg class="r" style="left:3447.2px;top:776px;" width="32" height="32" viewBox="0 0 32 32"><path d="M7 6 L4.8 6 Q2.8 6 2.8 8 L2.8 25.9 Q2.8 27.9 4.8 27.9 L22.7 27.9 Q24.7 27.9 24.7 25.9 L24.7 23.5" fill="none" stroke="#585858" stroke-width="2"/><rect x="7" y="1.8" width="21.9" height="21.7" rx="2" ry="2" fill="none" stroke="#585858" stroke-width="2"/><path d="M10.5 13.9 L14.7 19.5 L24.9 5.9" fill="none" stroke="#585858" stroke-width="3" stroke-linecap="round" stroke-linejoin="round"/></svg>
<div class="r" style="left:126.00px;top:817.00px;width:3380.00px;height:54.00px;background:#f4f4f4;"></div>
<svg class="r" style="left:204px;top:830px;" width="32" height="32" viewBox="0 0 32 32"><path d="M7 6 L4.8 6 Q2.8 6 2.8 8 L2.8 25.9 Q2.8 27.9 4.8 27.9 L22.7 27.9 Q24.7 27.9 24.7 25.9 L24.7 23.5" fill="none" stroke="#585858" stroke-width="2"/><rect x="7" y="1.8" width="21.9" height="21.7" rx="2" ry="2" fill="none" stroke="#585858" stroke-width="2"/></svg>
<svg class="r" style="left:290px;top:831px;" width="28" height="28" viewBox="0 0 28 28"><circle cx="14" cy="14" r="10.2" fill="#8aa63f"/></svg>
<div class="t" style="top:828.00px;font-size:34.5px;line-height:34.5px;height:34.5px;color:#000;left:347.57px;">Contabilizzata</div>
<div class="t" style="top:828.00px;font-size:34.5px;line-height:34.5px;height:34.5px;color:#000;left:654.75px;width:150.00px;text-align:right;">37792</div>
<div class="t" style="top:828.00px;font-size:34.5px;line-height:34.5px;height:34.5px;color:#000;left:821.04px;width:110.00px;text-align:right;">7923</div>
<div class="t" style="top:828.00px;font-size:34.5px;line-height:34.5px;height:34.5px;color:#000;left:941.91px;width:389.00px;overflow:hidden;">Amazon EU S.Ã  r.l., Succursale Italiana</div>
<div class="t" style="top:828.00px;font-size:34.5px;line-height:34.5px;height:34.5px;color:#000;left:1336.31px;width:45.50px;overflow:hidden;">IT</div>
<div class="t" style="top:828.00px;font-size:34.5px;line-height:34.5px;height:34.5px;color:#000;left:1391.62px;">08973230967</div>
<div class="t" style="top:828.00px;font-size:34.5px;line-height:34.5px;height:34.5px;color:#000;left:1657.00px;width:213.00px;text-align:center;">31/05/2020</div>
<div class="t" style="top:828.00px;font-size:34.5px;line-height:34.5px;height:34.5px;color:#000;left:1873.00px;width:195.00px;text-align:center;">31/05/2020</div>
<div class="t" style="top:828.00px;font-size:34.5px;line-height:34.5px;height:34.5px;color:#000;left:2071.00px;width:195.00px;text-align:center;">31/05/2020</div>
<div class="t" style="top:828.00px;font-size:34.5px;line-height:34.5px;height:34.5px;color:#000;left:2273.61px;">IT20-668211-3</div>
<div class="t" style="top:828.00px;font-size:34.5px;line-height:34.5px;height:34.5px;color:#000;left:2549.53px;width:200.00px;text-align:right;">112,18</div>
<div class="t" style="top:828.00px;font-size:34.5px;line-height:34.5px;height:34.5px;color:#000;left:2759.42px;width:80.00px;text-align:right;">5</div>
<div class="t" style="top:828.00px;font-size:34.5px;line-height:34.5px;height:34.5px;color:#000;left:2853.01px;width:180.00px;text-align:right;">3</div>
<div class="t" style="top:828.00px;font-size:34.5px;line-height:34.5px;height:34.5px;color:#000;left:3048.41px;width:280.50px;overflow:hidden;">AUTO INVIATA</div>
<div class="t" style="top:828.00px;font-size:34.5px;line-height:34.5px;height:34.5px;color:#000;left:3335.72px;">TD01</div>
<svg class="r" style="left:3447.2px;top:830px;" width="32" height="32" viewBox="0 0 32 32"><path d="M7 6 L4.8 6 Q2.8 6 2.8 8 L2.8 25.9 Q2.8 27.9 4.8 27.9 L22.7 27.9 Q24.7 27.9 24.7 25.9 L24.7 23.5" fill="none" stroke="#585858" stroke-width="2"/><rect x="7" y="1.8" width="21.9" height="21.7" rx="2" ry="2" fill="none" stroke="#585858" stroke-width="2"/><path d="M10.5 13.9 L14.7 19.5 L24.9 5.9" fill="none" stroke="#585858" stroke-width="3" stroke-linecap="round" stroke-linejoin="round"/></svg>
<div class="r" style="left:126.00px;top:871.00px;width:3380.00px;height:54.00px;background:#f4f4f4;"></div>
<div class="r" style="left:126.00px;top:872.00px;width:3380.00px;height:52.00px;background:#fff;"></div>
<div class="r" style="left:179.00px;top:872.00px;width:3.00px;height:52.00px;background:#f5f5f5;"></div>
<div class="r" style="left:269.00px;top:872.00px;width:3.00px;height:52.00px;background:#f5f5f5;"></div>
<div class="r" style="left:341.00px;top:872.00px;width:3.00px;height:52.00px;background:#f5f5f5;"></div>
<div class="r" style="left:647.00px;top:872.00px;width:3.00px;height:52.00px;background:#f5f5f5;"></div>
<div class="r" style="left:809.00px;top:872.00px;width:3.00px;height:52.00px;background:#f5f5f5;"></div>
<div class="r" style="left:935.00px;top:872.00px;width:3.00px;height:52.00px;background:#f5f5f5;"></div>
<div class="r" style="left:1331.00px;top:872.00px;width:3.00px;height:52.00px;background:#f5f5f5;"></div>
<div class="r" style="left:1385.00px;top:872.00px;width:3.00px;height:52.00px;background:#f5f5f5;"></div>
<div class="r" style="left:1655.00px;top:872.00px;width:3.00px;height:52.00px;background:#f5f5f5;"></div>
<div class="r" style="left:1871.00px;top:872.00px;width:3.00px;height:52.00px;background:#f5f5f5;"></div>
<div class="r" style="left:2069.00px;top:872.00px;width:3.00px;height:52.00px;background:#f5f5f5;"></div>
<div class="r" style="left:2267.00px;top:872.00px;width:3.00px;height:52.00px;background:#f5f5f5;"></div>
<div class="r" style="left:2537.00px;top:872.00px;width:3.00px;height:52.00px;background:#f5f5f5;"></div>
<div class="r" style="left:2753.00px;top:872.00px;width:3.00px;height:52.00px;background:#f5f5f5;"></div>
<div class="r" style="left:2843.00px;top:872.00px;width:3.00px;height:52.00px;background:#f5f5f5;"></div>
<div class="r" style="left:3040.00px;top:872.00px;width:3.00px;height:52.00px;background:#f5f5f5;"></div>
<div class="r" style="left:3329.00px;top:872.00px;width:3.00px;height:52.00px;background:#f5f5f5;"></div>
<div class="r" style="left:3437.00px;top:872.00px;width:3.00px;height:52.00px;background:#f5f5f5;"></div>
<div class="r" style="left:3491.00px;top:872.00px;width:3.00px;height:52.00px;background:#f5f5f5;"></div>
<svg class="r" style="left:204px;top:884px;" width="32" height="32" viewBox="0 0 32 32"><path d="M7 6 L4.8 6 Q2.8 6 2.8 8 L2.8 25.9 Q2.8 27.9 4.8 27.9 L22.7 27.9 Q24.7 27.9 24.7 25.9 L24.7 23.5" fill="none" stroke="#585858" stroke-width="2"/><rect x="7" y="1.8" width="21.9" height="21.7" rx="2" ry="2" fill="none" stroke="#585858" stroke-width="2"/></svg>
<svg class="r" style="left:290px;top:885px;" width="28" height="28" viewBox="0 0 28 28"><circle cx="14" cy="14" r="10.2" fill="#8aa63f"/></svg>
<div class="t" style="top:882.00px;font-size:34.5px;line-height:34.5px;height:34.5px;color:#000;left:347.57px;">Contabilizzata</div>
<div class="t" style="top:882.00px;font-size:34.5px;line-height:34.5px;height:34.5px;color:#000;left:654.75px;width:150.00px;text-align:right;">37792</div>
<div class="t" style="top:882.00px;font-size:34.5px;line-height:34.5px;height:34.5px;color:#000;left:821.04px;width:110.00px;text-align:right;">7923</div>
<div class="t" style="top:882.00px;font-size:34.5px;line-height:34.5px;height:34.5px;color:#000;left:941.91px;width:389.00px;overflow:hidden;">Amazon EU S.Ã  r.l., Succursale Italiana</div>
<div class="t" style="top:882.00px;font-size:34.5px;line-height:34.5px;height:34.5px;color:#000;left:1336.31px;width:45.50px;overflow:hidden;">IT</div>
<div class="t" style="top:882.00px;font-size:34.5px;line-height:34.5px;height:34.5px;color:#000;left:1391.62px;">08973230967</div>
<div class="t" style="top:882.00px;font-size:34.5px;line-height:34.5px;height:34.5px;color:#000;left:1657.00px;width:213.00px;text-align:center;">30/06/2020</div>
<div class="t" style="top:882.00px;font-size:34.5px;line-height:34.5px;height:34.5px;color:#000;left:1873.00px;width:195.00px;text-align:center;">30/06/2020</div>
<div class="t" style="top:882.00px;font-size:34.5px;line-height:34.5px;height:34.5px;color:#000;left:2071.00px;width:195.00px;text-align:center;">30/06/2020</div>
<div class="t" style="top:882.00px;font-size:34.5px;line-height:34.5px;height:34.5px;color:#000;left:2273.61px;">IT20-668211-4</div>
<div class="t" style="top:882.00px;font-size:34.5px;line-height:34.5px;height:34.5px;color:#000;left:2548.95px;width:200.00px;text-align:right;">37,04</div>
<div class="t" style="top:882.00px;font-size:34.5px;line-height:34.5px;height:34.5px;color:#000;left:2759.42px;width:80.00px;text-align:right;">5</div>
<div class="t" style="top:882.00px;font-size:34.5px;line-height:34.5px;height:34.5px;color:#000;left:2852.49px;width:180.00px;text-align:right;">4</div>
<div class="t" style="top:882.00px;font-size:34.5px;line-height:34.5px;height:34.5px;color:#000;left:3048.41px;width:280.50px;overflow:hidden;">AUTO INVIATA</div>
<div class="t" style="top:882.00px;font-size:34.5px;line-height:34.5px;height:34.5px;color:#000;left:3335.72px;">TD01</div>
<svg class="r" style="left:3447.2px;top:884px;" width="32" height="32" viewBox="0 0 32 32"><path d="M7 6 L4.8 6 Q2.8 6 2.8 8 L2.8 25.9 Q2.8 27.9 4.8 27.9 L22.7 27.9 Q24.7 27.9 24.7 25.9 L24.7 23.5" fill="none" stroke="#585858" stroke-width="2"/><rect x="7" y="1.8" width="21.9" height="21.7" rx="2" ry="2" fill="none" stroke="#585858" stroke-width="2"/><path d="M10.5 13.9 L14.7 19.5 L24.9 5.9" fill="none" stroke="#585858" stroke-width="3" stroke-linecap="round" stroke-linejoin="round"/></svg>
<div class="r" style="left:126.00px;top:925.00px;width:3380.00px;height:54.00px;background:#f4f4f4;"></div>
<svg class="r" style="left:204px;top:938px;" width="32" height="32" viewBox="0 0 32 32"><path d="M7 6 L4.8 6 Q2.8 6 2.8 8 L2.8 25.9 Q2.8 27.9 4.8 27.9 L22.7 27.9 Q24.7 27.9 24.7 25.9 L24.7 23.5" fill="none" stroke="#585858" stroke-width="2"/><rect x="7" y="1.8" width="21.9" height="21.7" rx="2" ry="2" fill="none" stroke="#585858" stroke-width="2"/></svg>
<svg class="r" style="left:290px;top:939px;" width="28" height="28" viewBox="0 0 28 28"><circle cx="14" cy="14" r="10.2" fill="#8aa63f"/></svg>
<div class="t" style="top:936.00px;font-size:34.5px;line-height:34.5px;height:34.5px;color:#000;left:347.57px;">Contabilizzata</div>
<div class="t" style="top:936.00px;font-size:34.5px;line-height:34.5px;height:34.5px;color:#000;left:654.75px;width:150.00px;text-align:right;">37792</div>
<div class="t" style="top:936.00px;font-size:34.5px;line-height:34.5px;height:34.5px;color:#000;left:821.04px;width:110.00px;text-align:right;">7923</div>
<div class="t" style="top:936.00px;font-size:34.5px;line-height:34.5px;height:34.5px;color:#000;left:941.91px;width:389.00px;overflow:hidden;">Amazon EU S.Ã  r.l., Succursale Italiana</div>
<div class="t" style="top:936.00px;font-size:34.5px;line-height:34.5px;height:34.5px;color:#000;left:1336.31px;width:45.50px;overflow:hidden;">IT</div>
<div class="t" style="top:936.00px;font-size:34.5px;line-height:34.5px;height:34.5px;color:#000;left:1391.62px;">08973230967</div>
<div class="t" style="top:936.00px;font-size:34.5px;line-height:34.5px;height:34.5px;color:#000;left:1657.19px;width:213.00px;text-align:center;">30/11/2021</div>
<div class="t" style="top:936.00px;font-size:34.5px;line-height:34.5px;height:34.5px;color:#000;left:1873.19px;width:195.00px;text-align:center;">30/11/2021</div>
<div class="t" style="top:936.00px;font-size:34.5px;line-height:34.5px;height:34.5px;color:#000;left:2071.19px;width:195.00px;text-align:center;">30/11/2021</div>
<div class="t" style="top:936.00px;font-size:34.5px;line-height:34.5px;height:34.5px;color:#000;left:2273.61px;">IT21-668211-1</div>
<div class="t" style="top:936.00px;font-size:34.5px;line-height:34.5px;height:34.5px;color:#000;left:2549.34px;width:200.00px;text-align:right;">120,00</div>
<div class="t" style="top:936.00px;font-size:34.5px;line-height:34.5px;height:34.5px;color:#000;left:2759.42px;width:80.00px;text-align:right;">5</div>
<div class="t" style="top:936.00px;font-size:34.5px;line-height:34.5px;height:34.5px;color:#000;left:2853.18px;width:180.00px;text-align:right;">1</div>
<div class="t" style="top:936.00px;font-size:34.5px;line-height:34.5px;height:34.5px;color:#000;left:3048.41px;width:280.50px;overflow:hidden;">AUTO INVIATA</div>
<div class="t" style="top:936.00px;font-size:34.5px;line-height:34.5px;height:34.5px;color:#000;left:3335.72px;">TD01</div>
<svg class="r" style="left:3447.2px;top:938px;" width="32" height="32" viewBox="0 0 32 32"><path d="M7 6 L4.8 6 Q2.8 6 2.8 8 L2.8 25.9 Q2.8 27.9 4.8 27.9 L22.7 27.9 Q24.7 27.9 24.7 25.9 L24.7 23.5" fill="none" stroke="#585858" stroke-width="2"/><rect x="7" y="1.8" width="21.9" height="21.7" rx="2" ry="2" fill="none" stroke="#585858" stroke-width="2"/><path d="M10.5 13.9 L14.7 19.5 L24.9 5.9" fill="none" stroke="#585858" stroke-width="3" stroke-linecap="round" stroke-linejoin="round"/></svg>
<div class="r" style="left:126.00px;top:979.00px;width:3380.00px;height:54.00px;background:#f4f4f4;"></div>
<div class="r" style="left:126.00px;top:980.00px;width:3380.00px;height:52.00px;background:#fff;"></div>
<div class="r" style="left:179.00px;top:980.00px;width:3.00px;height:52.00px;background:#f5f5f5;"></div>
<div class="r" style="left:269.00px;top:980.00px;width:3.00px;height:52.00px;background:#f5f5f5;"></div>
<div class="r" style="left:341.00px;top:980.00px;width:3.00px;height:52.00px;background:#f5f5f5;"></div>
<div class="r" style="left:647.00px;top:980.00px;width:3.00px;height:52.00px;background:#f5f5f5;"></div>
<div class="r" style="left:809.00px;top:980.00px;width:3.00px;height:52.00px;background:#f5f5f5;"></div>
<div class="r" style="left:935.00px;top:980.00px;width:3.00px;height:52.00px;background:#f5f5f5;"></div>
<div class="r" style="left:1331.00px;top:980.00px;width:3.00px;height:52.00px;background:#f5f5f5;"></div>
<div class="r" style="left:1385.00px;top:980.00px;width:3.00px;height:52.00px;background:#f5f5f5;"></div>
<div class="r" style="left:1655.00px;top:980.00px;width:3.00px;height:52.00px;background:#f5f5f5;"></div>
<div class="r" style="left:1871.00px;top:980.00px;width:3.00px;height:52.00px;background:#f5f5f5;"></div>
<div class="r" style="left:2069.00px;top:980.00px;width:3.00px;height:52.00px;background:#f5f5f5;"></div>
<div class="r" style="left:2267.00px;top:980.00px;width:3.00px;height:52.00px;background:#f5f5f5;"></div>
<div class="r" style="left:2537.00px;top:980.00px;width:3.00px;height:52.00px;background:#f5f5f5;"></div>
<div class="r" style="left:2753.00px;top:980.00px;width:3.00px;height:52.00px;background:#f5f5f5;"></div>
<div class="r" style="left:2843.00px;top:980.00px;width:3.00px;height:52.00px;background:#f5f5f5;"></div>
<div class="r" style="left:3040.00px;top:980.00px;width:3.00px;height:52.00px;background:#f5f5f5;"></div>
<div class="r" style="left:3329.00px;top:980.00px;width:3.00px;height:52.00px;background:#f5f5f5;"></div>
<div class="r" style="left:3437.00px;top:980.00px;width:3.00px;height:52.00px;background:#f5f5f5;"></div>
<div class="r" style="left:3491.00px;top:980.00px;width:3.00px;height:52.00px;background:#f5f5f5;"></div>
<svg class="r" style="left:204px;top:992px;" width="32" height="32" viewBox="0 0 32 32"><path d="M7 6 L4.8 6 Q2.8 6 2.8 8 L2.8 25.9 Q2.8 27.9 4.8 27.9 L22.7 27.9 Q24.7 27.9 24.7 25.9 L24.7 23.5" fill="none" stroke="#585858" stroke-width="2"/><rect x="7" y="1.8" width="21.9" height="21.7" rx="2" ry="2" fill="none" stroke="#585858" stroke-width="2"/></svg>
<svg class="r" style="left:290px;top:993px;" width="28" height="28" viewBox="0 0 28 28"><circle cx="14" cy="14" r="10.2" fill="#8aa63f"/></svg>
<div class="t" style="top:990.00px;font-size:34.5px;line-height:34.5px;height:34.5px;color:#000;left:347.57px;">Contabilizzata</div>
<div class="t" style="top:990.00px;font-size:34.5px;line-height:34.5px;height:34.5px;color:#000;left:654.75px;width:150.00px;text-align:right;">37792</div>
<div class="t" style="top:990.00px;font-size:34.5px;line-height:34.5px;height:34.5px;color:#000;left:821.04px;width:110.00px;text-align:right;">7923</div>
<div class="t" style="top:990.00px;font-size:34.5px;line-height:34.5px;height:34.5px;color:#000;left:941.91px;width:389.00px;overflow:hidden;">Amazon EU S.Ã  r.l., Succursale Italiana</div>
<div class="t" style="top:990.00px;font-size:34.5px;line-height:34.5px;height:34.5px;color:#000;left:1336.31px;width:45.50px;overflow:hidden;">IT</div>
<div class="t" style="top:990.00px;font-size:34.5px;line-height:34.5px;height:34.5px;color:#000;left:1391.62px;">08973230967</div>
<div class="t" style="top:990.00px;font-size:34.5px;line-height:34.5px;height:34.5px;color:#000;left:1657.17px;width:213.00px;text-align:center;">31/12/2021</div>
<div class="t" style="top:990.00px;font-size:34.5px;line-height:34.5px;height:34.5px;color:#000;left:1873.17px;width:195.00px;text-align:center;">31/12/2021</div>
<div class="t" style="top:990.00px;font-size:34.5px;line-height:34.5px;height:34.5px;color:#000;left:2071.17px;width:195.00px;text-align:center;">31/12/2021</div>
<div class="t" style="top:990.00px;font-size:34.5px;line-height:34.5px;height:34.5px;color:#000;left:2273.61px;">IT21-668211-2</div>
<div class="t" style="top:990.00px;font-size:34.5px;line-height:34.5px;height:34.5px;color:#000;left:2549.47px;width:200.00px;text-align:right;">39,98</div>
<div class="t" style="top:990.00px;font-size:34.5px;line-height:34.5px;height:34.5px;color:#000;left:2759.42px;width:80.00px;text-align:right;">5</div>
<div class="t" style="top:990.00px;font-size:34.5px;line-height:34.5px;height:34.5px;color:#000;left:2853.27px;width:180.00px;text-align:right;">2</div>
<div class="t" style="top:990.00px;font-size:34.5px;line-height:34.5px;height:34.5px;color:#000;left:3048.41px;width:280.50px;overflow:hidden;">AUTO INVIATA</div>
<div class="t" style="top:990.00px;font-size:34.5px;line-height:34.5px;height:34.5px;color:#000;left:3335.72px;">TD01</div>
<svg class="r" style="left:3447.2px;top:992px;" width="32" height="32" viewBox="0 0 32 32"><path d="M7 6 L4.8 6 Q2.8 6 2.8 8 L2.8 25.9 Q2.8 27.9 4.8 27.9 L22.7 27.9 Q24.7 27.9 24.7 25.9 L24.7 23.5" fill="none" stroke="#585858" stroke-width="2"/><rect x="7" y="1.8" width="21.9" height="21.7" rx="2" ry="2" fill="none" stroke="#585858" stroke-width="2"/><path d="M10.5 13.9 L14.7 19.5 L24.9 5.9" fill="none" stroke="#585858" stroke-width="3" stroke-linecap="round" stroke-linejoin="round"/></svg>
<div class="r" style="left:126.00px;top:1033.00px;width:3380.00px;height:54.00px;background:#f4f4f4;"></div>
<svg class="r" style="left:204px;top:1046px;" width="32" height="32" viewBox="0 0 32 32"><path d="M7 6 L4.8 6 Q2.8 6 2.8 8 L2.8 25.9 Q2.8 27.9 4.8 27.9 L22.7 27.9 Q24.7 27.9 24.7 25.9 L24.7 23.5" fill="none" stroke="#585858" stroke-width="2"/><rect x="7" y="1.8" width="21.9" height="21.7" rx="2" ry="2" fill="none" stroke="#585858" stroke-width="2"/></svg>
<svg class="r" style="left:290px;top:1047px;" width="28" height="28" viewBox="0 0 28 28"><circle cx="14" cy="14" r="10.2" fill="#8aa63f"/></svg>
<div class="t" style="top:1044.00px;font-size:34.5px;line-height:34.5px;height:34.5px;color:#000;left:347.57px;">Contabilizzata</div>
<div class="t" style="top:1044.00px;font-size:34.5px;line-height:34.5px;height:34.5px;color:#000;left:654.75px;width:150.00px;text-align:right;">37792</div>
<div class="t" style="top:1044.00px;font-size:34.5px;line-height:34.5px;height:34.5px;color:#000;left:821.04px;width:110.00px;text-align:right;">7923</div>
<div class="t" style="top:1044.00px;font-size:34.5px;line-height:34.5px;height:34.5px;color:#000;left:941.91px;width:389.00px;overflow:hidden;">Amazon EU S.Ã  r.l., Succursale Italiana</div>
<div class="t" style="top:1044.00px;font-size:34.5px;line-height:34.5px;height:34.5px;color:#000;left:1336.31px;width:45.50px;overflow:hidden;">IT</div>
<div class="t" style="top:1044.00px;font-size:34.5px;line-height:34.5px;height:34.5px;color:#000;left:1391.62px;">08973230967</div>
<div class="t" style="top:1044.00px;font-size:34.5px;line-height:34.5px;height:34.5px;color:#000;left:1657.22px;width:213.00px;text-align:center;">31/03/2022</div>
<div class="t" style="top:1044.00px;font-size:34.5px;line-height:34.5px;height:34.5px;color:#000;left:1873.22px;width:195.00px;text-align:center;">31/03/2022</div>
<div class="t" style="top:1044.00px;font-size:34.5px;line-height:34.5px;height:34.5px;color:#000;left:2071.22px;width:195.00px;text-align:center;">31/03/2022</div>
<div class="t" style="top:1044.00px;font-size:34.5px;line-height:34.5px;height:34.5px;color:#000;left:2273.61px;">IT22-668211-1</div>
<div class="t" style="top:1044.00px;font-size:34.5px;line-height:34.5px;height:34.5px;color:#000;left:2549.51px;width:200.00px;text-align:right;">104,98</div>
<div class="t" style="top:1044.00px;font-size:34.5px;line-height:34.5px;height:34.5px;color:#000;left:2759.42px;width:80.00px;text-align:right;">5</div>
<div class="t" style="top:1044.00px;font-size:34.5px;line-height:34.5px;height:34.5px;color:#000;left:2853.18px;width:180.00px;text-align:right;">1</div>
<div class="t" style="top:1044.00px;font-size:34.5px;line-height:34.5px;height:34.5px;color:#000;left:3048.41px;width:280.50px;overflow:hidden;">AUTO INVIATA</div>
<div class="t" style="top:1044.00px;font-size:34.5px;line-height:34.5px;height:34.5px;color:#000;left:3335.72px;">TD01</div>
<svg class="r" style="left:3447.2px;top:1046px;" width="32" height="32" viewBox="0 0 32 32"><path d="M7 6 L4.8 6 Q2.8 6 2.8 8 L2.8 25.9 Q2.8 27.9 4.8 27.9 L22.7 27.9 Q24.7 27.9 24.7 25.9 L24.7 23.5" fill="none" stroke="#585858" stroke-width="2"/><rect x="7" y="1.8" width="21.9" height="21.7" rx="2" ry="2" fill="none" stroke="#585858" stroke-width="2"/><path d="M10.5 13.9 L14.7 19.5 L24.9 5.9" fill="none" stroke="#585858" stroke-width="3" stroke-linecap="round" stroke-linejoin="round"/></svg>
<div class="r" style="left:126.00px;top:1087.00px;width:3380.00px;height:54.00px;background:#f4f4f4;"></div>
<div class="r" style="left:126.00px;top:1088.00px;width:3380.00px;height:52.00px;background:#fff;"></div>
<div class="r" style="left:179.00px;top:1088.00px;width:3.00px;height:52.00px;background:#f5f5f5;"></div>
<div class="r" style="left:269.00px;top:1088.00px;width:3.00px;height:52.00px;background:#f5f5f5;"></div>
<div class="r" style="left:341.00px;top:1088.00px;width:3.00px;height:52.00px;background:#f5f5f5;"></div>
<div class="r" style="left:647.00px;top:1088.00px;width:3.00px;height:52.00px;background:#f5f5f5;"></div>
<div class="r" style="left:809.00px;top:1088.00px;width:3.00px;height:52.00px;background:#f5f5f5;"></div>
<div class="r" style="left:935.00px;top:1088.00px;width:3.00px;height:52.00px;background:#f5f5f5;"></div>
<div class="r" style="left:1331.00px;top:1088.00px;width:3.00px;height:52.00px;background:#f5f5f5;"></div>
<div class="r" style="left:1385.00px;top:1088.00px;width:3.00px;height:52.00px;background:#f5f5f5;"></div>
<div class="r" style="left:1655.00px;top:1088.00px;width:3.00px;height:52.00px;background:#f5f5f5;"></div>
<div class="r" style="left:1871.00px;top:1088.00px;width:3.00px;height:52.00px;background:#f5f5f5;"></div>
<div class="r" style="left:2069.00px;top:1088.00px;width:3.00px;height:52.00px;background:#f5f5f5;"></div>
<div class="r" style="left:2267.00px;top:1088.00px;width:3.00px;height:52.00px;background:#f5f5f5;"></div>
<div class="r" style="left:2537.00px;top:1088.00px;width:3.00px;height:52.00px;background:#f5f5f5;"></div>
<div class="r" style="left:2753.00px;top:1088.00px;width:3.00px;height:52.00px;background:#f5f5f5;"></div>
<div class="r" style="left:2843.00px;top:1088.00px;width:3.00px;height:52.00px;background:#f5f5f5;"></div>
<div class="r" style="left:3040.00px;top:1088.00px;width:3.00px;height:52.00px;background:#f5f5f5;"></div>
<div class="r" style="left:3329.00px;top:1088.00px;width:3.00px;height:52.00px;background:#f5f5f5;"></div>
<div class="r" style="left:3437.00px;top:1088.00px;width:3.00px;height:52.00px;background:#f5f5f5;"></div>
<div class="r" style="left:3491.00px;top:1088.00px;width:3.00px;height:52.00px;background:#f5f5f5;"></div>
<svg class="r" style="left:204px;top:1100px;" width="32" height="32" viewBox="0 0 32 32"><path d="M7 6 L4.8 6 Q2.8 6 2.8 8 L2.8 25.9 Q2.8 27.9 4.8 27.9 L22.7 27.9 Q24.7 27.9 24.7 25.9 L24.7 23.5" fill="none" stroke="#585858" stroke-width="2"/><rect x="7" y="1.8" width="21.9" height="21.7" rx="2" ry="2" fill="none" stroke="#585858" stroke-width="2"/></svg>
<svg class="r" style="left:290px;top:1101px;" width="28" height="28" viewBox="0 0 28 28"><circle cx="14" cy="14" r="10.2" fill="#8aa63f"/></svg>
<div class="t" style="top:1098.00px;font-size:34.5px;line-height:34.5px;height:34.5px;color:#000;left:347.57px;">Contabilizzata</div>
<div class="t" style="top:1098.00px;font-size:34.5px;line-height:34.5px;height:34.5px;color:#000;left:654.75px;width:150.00px;text-align:right;">37792</div>
<div class="t" style="top:1098.00px;font-size:34.5px;line-height:34.5px;height:34.5px;color:#000;left:821.04px;width:110.00px;text-align:right;">7923</div>
<div class="t" style="top:1098.00px;font-size:34.5px;line-height:34.5px;height:34.5px;color:#000;left:941.91px;width:389.00px;overflow:hidden;">Amazon EU S.Ã  r.l., Succursale Italiana</div>
<div class="t" style="top:1098.00px;font-size:34.5px;line-height:34.5px;height:34.5px;color:#000;left:1336.31px;width:45.50px;overflow:hidden;">IT</div>
<div class="t" style="top:1098.00px;font-size:34.5px;line-height:34.5px;height:34.5px;color:#000;left:1391.62px;">08973230967</div>
<div class="t" style="top:1098.00px;font-size:34.5px;line-height:34.5px;height:34.5px;color:#000;left:1657.22px;width:213.00px;text-align:center;">30/04/2022</div>
<div class="t" style="top:1098.00px;font-size:34.5px;line-height:34.5px;height:34.5px;color:#000;left:1873.22px;width:195.00px;text-align:center;">30/04/2022</div>
<div class="t" style="top:1098.00px;font-size:34.5px;line-height:34.5px;height:34.5px;color:#000;left:2071.22px;width:195.00px;text-align:center;">30/04/2022</div>
<div class="t" style="top:1098.00px;font-size:34.5px;line-height:34.5px;height:34.5px;color:#000;left:2273.61px;">IT22-668211-2</div>
<div class="t" style="top:1098.00px;font-size:34.5px;line-height:34.5px;height:34.5px;color:#000;left:2549.34px;width:200.00px;text-align:right;">120,00</div>
<div class="t" style="top:1098.00px;font-size:34.5px;line-height:34.5px;height:34.5px;color:#000;left:2759.42px;width:80.00px;text-align:right;">5</div>
<div class="t" style="top:1098.00px;font-size:34.5px;line-height:34.5px;height:34.5px;color:#000;left:2853.27px;width:180.00px;text-align:right;">2</div>
<div class="t" style="top:1098.00px;font-size:34.5px;line-height:34.5px;height:34.5px;color:#000;left:3048.41px;width:280.50px;overflow:hidden;">AUTO INVIATA</div>
<div class="t" style="top:1098.00px;font-size:34.5px;line-height:34.5px;height:34.5px;color:#000;left:3335.72px;">TD01</div>
<svg class="r" style="left:3447.2px;top:1100px;" width="32" height="32" viewBox="0 0 32 32"><path d="M7 6 L4.8 6 Q2.8 6 2.8 8 L2.8 25.9 Q2.8 27.9 4.8 27.9 L22.7 27.9 Q24.7 27.9 24.7 25.9 L24.7 23.5" fill="none" stroke="#585858" stroke-width="2"/><rect x="7" y="1.8" width="21.9" height="21.7" rx="2" ry="2" fill="none" stroke="#585858" stroke-width="2"/><path d="M10.5 13.9 L14.7 19.5 L24.9 5.9" fill="none" stroke="#585858" stroke-width="3" stroke-linecap="round" stroke-linejoin="round"/></svg>
<div class="r" style="left:126.00px;top:1141.00px;width:3380.00px;height:54.00px;background:#f4f4f4;"></div>
<svg class="r" style="left:204px;top:1154px;" width="32" height="32" viewBox="0 0 32 32"><path d="M7 6 L4.8 6 Q2.8 6 2.8 8 L2.8 25.9 Q2.8 27.9 4.8 27.9 L22.7 27.9 Q24.7 27.9 24.7 25.9 L24.7 23.5" fill="none" stroke="#585858" stroke-width="2"/><rect x="7" y="1.8" width="21.9" height="21.7" rx="2" ry="2" fill="none" stroke="#585858" stroke-width="2"/></svg>
<svg class="r" style="left:290px;top:1155px;" width="28" height="28" viewBox="0 0 28 28"><circle cx="14" cy="14" r="10.2" fill="#8aa63f"/></svg>
<div class="t" style="top:1152.00px;font-size:34.5px;line-height:34.5px;height:34.5px;color:#000;left:347.57px;">Contabilizzata</div>
<div class="t" style="top:1152.00px;font-size:34.5px;line-height:34.5px;height:34.5px;color:#000;left:654.75px;width:150.00px;text-align:right;">37792</div>
<div class="t" style="top:1152.00px;font-size:34.5px;line-height:34.5px;height:34.5px;color:#000;left:821.04px;width:110.00px;text-align:right;">7923</div>
<div class="t" style="top:1152.00px;font-size:34.5px;line-height:34.5px;height:34.5px;color:#000;left:941.91px;width:389.00px;overflow:hidden;">Amazon EU S.Ã  r.l., Succursale Italiana</div>
<div class="t" style="top:1152.00px;font-size:34.5px;line-height:34.5px;height:34.5px;color:#000;left:1336.31px;width:45.50px;overflow:hidden;">IT</div>
<div class="t" style="top:1152.00px;font-size:34.5px;line-height:34.5px;height:34.5px;color:#000;left:1391.62px;">08973230967</div>
<div class="t" style="top:1152.00px;font-size:34.5px;line-height:34.5px;height:34.5px;color:#000;left:1657.22px;width:213.00px;text-align:center;">31/05/2022</div>
<div class="t" style="top:1152.00px;font-size:34.5px;line-height:34.5px;height:34.5px;color:#000;left:1873.22px;width:195.00px;text-align:center;">31/05/2022</div>
<div class="t" style="top:1152.00px;font-size:34.5px;line-height:34.5px;height:34.5px;color:#000;left:2071.22px;width:195.00px;text-align:center;">31/05/2022</div>
<div class="t" style="top:1152.00px;font-size:34.5px;line-height:34.5px;height:34.5px;color:#000;left:2273.61px;">IT22-668211-3</div>
<div class="t" style="top:1152.00px;font-size:34.5px;line-height:34.5px;height:34.5px;color:#000;left:2549.77px;width:200.00px;text-align:right;">288,92</div>
<div class="t" style="top:1152.00px;font-size:34.5px;line-height:34.5px;height:34.5px;color:#000;left:2759.42px;width:80.00px;text-align:right;">5</div>
<div class="t" style="top:1152.00px;font-size:34.5px;line-height:34.5px;height:34.5px;color:#000;left:2853.01px;width:180.00px;text-align:right;">3</div>
<div class="t" style="top:1152.00px;font-size:34.5px;line-height:34.5px;height:34.5px;color:#000;left:3048.41px;width:280.50px;overflow:hidden;">AUTO INVIATA</div>
<div class="t" style="top:1152.00px;font-size:34.5px;line-height:34.5px;height:34.5px;color:#000;left:3335.72px;">TD01</div>
<svg class="r" style="left:3447.2px;top:1154px;" width="32" height="32" viewBox="0 0 32 32"><path d="M7 6 L4.8 6 Q2.8 6 2.8 8 L2.8 25.9 Q2.8 27.9 4.8 27.9 L22.7 27.9 Q24.7 27.9 24.7 25.9 L24.7 23.5" fill="none" stroke="#585858" stroke-width="2"/><rect x="7" y="1.8" width="21.9" height="21.7" rx="2" ry="2" fill="none" stroke="#585858" stroke-width="2"/><path d="M10.5 13.9 L14.7 19.5 L24.9 5.9" fill="none" stroke="#585858" stroke-width="3" stroke-linecap="round" stroke-linejoin="round"/></svg>
<div class="r" style="left:126.00px;top:1195.00px;width:3380.00px;height:54.00px;background:#f4f4f4;"></div>
<div class="r" style="left:126.00px;top:1196.00px;width:3380.00px;height:52.00px;background:#fff;"></div>
<div class="r" style="left:179.00px;top:1196.00px;width:3.00px;height:52.00px;background:#f5f5f5;"></div>
<div class="r" style="left:269.00px;top:1196.00px;width:3.00px;height:52.00px;background:#f5f5f5;"></div>
<div class="r" style="left:341.00px;top:1196.00px;width:3.00px;height:52.00px;background:#f5f5f5;"></div>
<div class="r" style="left:647.00px;top:1196.00px;width:3.00px;height:52.00px;background:#f5f5f5;"></div>
<div class="r" style="left:809.00px;top:1196.00px;width:3.00px;height:52.00px;background:#f5f5f5;"></div>
<div class="r" style="left:935.00px;top:1196.00px;width:3.00px;height:52.00px;background:#f5f5f5;"></div>
<div class="r" style="left:1331.00px;top:1196.00px;width:3.00px;height:52.00px;background:#f5f5f5;"></div>
<div class="r" style="left:1385.00px;top:1196.00px;width:3.00px;height:52.00px;background:#f5f5f5;"></div>
<div class="r" style="left:1655.00px;top:1196.00px;width:3.00px;height:52.00px;background:#f5f5f5;"></div>
<div class="r" style="left:1871.00px;top:1196.00px;width:3.00px;height:52.00px;background:#f5f5f5;"></div>
<div class="r" style="left:2069.00px;top:1196.00px;width:3.00px;height:52.00px;background:#f5f5f5;"></div>
<div class="r" style="left:2267.00px;top:1196.00px;width:3.00px;height:52.00px;background:#f5f5f5;"></div>
<div class="r" style="left:2537.00px;top:1196.00px;width:3.00px;height:52.00px;background:#f5f5f5;"></div>
<div class="r" style="left:2753.00px;top:1196.00px;width:3.00px;height:52.00px;background:#f5f5f5;"></div>
<div class="r" style="left:2843.00px;top:1196.00px;width:3.00px;height:52.00px;background:#f5f5f5;"></div>
<div class="r" style="left:3040.00px;top:1196.00px;width:3.00px;height:52.00px;background:#f5f5f5;"></div>
<div class="r" style="left:3329.00px;top:1196.00px;width:3.00px;height:52.00px;background:#f5f5f5;"></div>
<div class="r" style="left:3437.00px;top:1196.00px;width:3.00px;height:52.00px;background:#f5f5f5;"></div>
<div class="r" style="left:3491.00px;top:1196.00px;width:3.00px;height:52.00px;background:#f5f5f5;"></div>
<svg class="r" style="left:204px;top:1208px;" width="32" height="32" viewBox="0 0 32 32"><path d="M7 6 L4.8 6 Q2.8 6 2.8 8 L2.8 25.9 Q2.8 27.9 4.8 27.9 L22.7 27.9 Q24.7 27.9 24.7 25.9 L24.7 23.5" fill="none" stroke="#585858" stroke-width="2"/><rect x="7" y="1.8" width="21.9" height="21.7" rx="2" ry="2" fill="none" stroke="#585858" stroke-width="2"/></svg>
<svg class="r" style="left:290px;top:1209px;" width="28" height="28" viewBox="0 0 28 28"><circle cx="14" cy="14" r="10.2" fill="#8aa63f"/></svg>
<div class="t" style="top:1206.00px;font-size:34.5px;line-height:34.5px;height:34.5px;color:#000;left:347.57px;">Contabilizzata</div>
<div class="t" style="top:1206.00px;font-size:34.5px;line-height:34.5px;height:34.5px;color:#000;left:654.75px;width:150.00px;text-align:right;">37792</div>
<div class="t" style="top:1206.00px;font-size:34.5px;line-height:34.5px;height:34.5px;color:#000;left:821.04px;width:110.00px;text-align:right;">7923</div>
<div class="t" style="top:1206.00px;font-size:34.5px;line-height:34.5px;height:34.5px;color:#000;left:941.91px;width:389.00px;overflow:hidden;">Amazon EU S.Ã  r.l., Succursale Italiana</div>
<div class="t" style="top:1206.00px;font-size:34.5px;line-height:34.5px;height:34.5px;color:#000;left:1336.31px;width:45.50px;overflow:hidden;">IT</div>
<div class="t" style="top:1206.00px;font-size:34.5px;line-height:34.5px;height:34.5px;color:#000;left:1391.62px;">08973230967</div>
<div class="t" style="top:1206.00px;font-size:34.5px;line-height:34.5px;height:34.5px;color:#000;left:1657.22px;width:213.00px;text-align:center;">30/06/2022</div>
<div class="t" style="top:1206.00px;font-size:34.5px;line-height:34.5px;height:34.5px;color:#000;left:1873.22px;width:195.00px;text-align:center;">30/06/2022</div>
<div class="t" style="top:1206.00px;font-size:34.5px;line-height:34.5px;height:34.5px;color:#000;left:2071.22px;width:195.00px;text-align:center;">30/06/2022</div>
<div class="t" style="top:1206.00px;font-size:34.5px;line-height:34.5px;height:34.5px;color:#000;left:2273.61px;">IT22-668211-4</div>
<div class="t" style="top:1206.00px;font-size:34.5px;line-height:34.5px;height:34.5px;color:#000;left:2549.55px;width:200.00px;text-align:right;">38,49</div>
<div class="t" style="top:1206.00px;font-size:34.5px;line-height:34.5px;height:34.5px;color:#000;left:2759.42px;width:80.00px;text-align:right;">5</div>
<div class="t" style="top:1206.00px;font-size:34.5px;line-height:34.5px;height:34.5px;color:#000;left:2852.49px;width:180.00px;text-align:right;">4</div>
<div class="t" style="top:1206.00px;font-size:34.5px;line-height:34.5px;height:34.5px;color:#000;left:3048.41px;width:280.50px;overflow:hidden;">AUTO INVIATA</div>
<div class="t" style="top:1206.00px;font-size:34.5px;line-height:34.5px;height:34.5px;color:#000;left:3335.72px;">TD01</div>
<svg class="r" style="left:3447.2px;top:1208px;" width="32" height="32" viewBox="0 0 32 32"><path d="M7 6 L4.8 6 Q2.8 6 2.8 8 L2.8 25.9 Q2.8 27.9 4.8 27.9 L22.7 27.9 Q24.7 27.9 24.7 25.9 L24.7 23.5" fill="none" stroke="#585858" stroke-width="2"/><rect x="7" y="1.8" width="21.9" height="21.7" rx="2" ry="2" fill="none" stroke="#585858" stroke-width="2"/><path d="M10.5 13.9 L14.7 19.5 L24.9 5.9" fill="none" stroke="#585858" stroke-width="3" stroke-linecap="round" stroke-linejoin="round"/></svg>
<div class="r" style="left:126.00px;top:1249.00px;width:3380.00px;height:54.00px;background:#f4f4f4;"></div>
<svg class="r" style="left:204px;top:1262px;" width="32" height="32" viewBox="0 0 32 32"><path d="M7 6 L4.8 6 Q2.8 6 2.8 8 L2.8 25.9 Q2.8 27.9 4.8 27.9 L22.7 27.9 Q24.7 27.9 24.7 25.9 L24.7 23.5" fill="none" stroke="#585858" stroke-width="2"/><rect x="7" y="1.8" width="21.9" height="21.7" rx="2" ry="2" fill="none" stroke="#585858" stroke-width="2"/></svg>
<svg class="r" style="left:290px;top:1263px;" width="28" height="28" viewBox="0 0 28 28"><circle cx="14" cy="14" r="10.2" fill="#8aa63f"/></svg>
<div class="t" style="top:1260.00px;font-size:34.5px;line-height:34.5px;height:34.5px;color:#000;left:347.57px;">Contabilizzata</div>
<div class="t" style="top:1260.00px;font-size:34.5px;line-height:34.5px;height:34.5px;color:#000;left:654.75px;width:150.00px;text-align:right;">37792</div>
<div class="t" style="top:1260.00px;font-size:34.5px;line-height:34.5px;height:34.5px;color:#000;left:821.04px;width:110.00px;text-align:right;">7923</div>
<div class="t" style="top:1260.00px;font-size:34.5px;line-height:34.5px;height:34.5px;color:#000;left:941.91px;width:389.00px;overflow:hidden;">Amazon EU S.Ã  r.l., Succursale Italiana</div>
<div class="t" style="top:1260.00px;font-size:34.5px;line-height:34.5px;height:34.5px;color:#000;left:1336.31px;width:45.50px;overflow:hidden;">IT</div>
<div class="t" style="top:1260.00px;font-size:34.5px;line-height:34.5px;height:34.5px;color:#000;left:1391.62px;">08973230967</div>
<div class="t" style="top:1260.00px;font-size:34.5px;line-height:34.5px;height:34.5px;color:#000;left:1657.22px;width:213.00px;text-align:center;">31/07/2022</div>
<div class="t" style="top:1260.00px;font-size:34.5px;line-height:34.5px;height:34.5px;color:#000;left:1873.22px;width:195.00px;text-align:center;">31/07/2022</div>
<div class="t" style="top:1260.00px;font-size:34.5px;line-height:34.5px;height:34.5px;color:#000;left:2071.22px;width:195.00px;text-align:center;">31/07/2022</div>
<div class="t" style="top:1260.00px;font-size:34.5px;line-height:34.5px;height:34.5px;color:#000;left:2273.61px;">IT22-668211-5</div>
<div class="t" style="top:1260.00px;font-size:34.5px;line-height:34.5px;height:34.5px;color:#000;left:2549.38px;width:200.00px;text-align:right;">70,15</div>
<div class="t" style="top:1260.00px;font-size:34.5px;line-height:34.5px;height:34.5px;color:#000;left:2759.42px;width:80.00px;text-align:right;">5</div>
<div class="t" style="top:1260.00px;font-size:34.5px;line-height:34.5px;height:34.5px;color:#000;left:2852.92px;width:180.00px;text-align:right;">5</div>
<div class="t" style="top:1260.00px;font-size:34.5px;line-height:34.5px;height:34.5px;color:#000;left:3048.41px;width:280.50px;overflow:hidden;">AUTO INVIATA</div>
<div class="t" style="top:1260.00px;font-size:34.5px;line-height:34.5px;height:34.5px;color:#000;left:3335.72px;">TD01</div>
<svg class="r" style="left:3447.2px;top:1262px;" width="32" height="32" viewBox="0 0 32 32"><path d="M7 6 L4.8 6 Q2.8 6 2.8 8 L2.8 25.9 Q2.8 27.9 4.8 27.9 L22.7 27.9 Q24.7 27.9 24.7 25.9 L24.7 23.5" fill="none" stroke="#585858" stroke-width="2"/><rect x="7" y="1.8" width="21.9" height="21.7" rx="2" ry="2" fill="none" stroke="#585858" stroke-width="2"/><path d="M10.5 13.9 L14.7 19.5 L24.9 5.9" fill="none" stroke="#585858" stroke-width="3" stroke-linecap="round" stroke-linejoin="round"/></svg>
<div class="r" style="left:126.00px;top:1303.00px;width:3380.00px;height:54.00px;background:#f4f4f4;"></div>
<div class="r" style="left:126.00px;top:1304.00px;width:3380.00px;height:52.00px;background:#fff;"></div>
<div class="r" style="left:179.00px;top:1304.00px;width:3.00px;height:52.00px;background:#f5f5f5;"></div>
<div class="r" style="left:269.00px;top:1304.00px;width:3.00px;height:52.00px;background:#f5f5f5;"></div>
<div class="r" style="left:341.00px;top:1304.00px;width:3.00px;height:52.00px;background:#f5f5f5;"></div>
<div class="r" style="left:647.00px;top:1304.00px;width:3.00px;height:52.00px;background:#f5f5f5;"></div>
<div class="r" style="left:809.00px;top:1304.00px;width:3.00px;height:52.00px;background:#f5f5f5;"></div>
<div class="r" style="left:935.00px;top:1304.00px;width:3.00px;height:52.00px;background:#f5f5f5;"></div>
<div class="r" style="left:1331.00px;top:1304.00px;width:3.00px;height:52.00px;background:#f5f5f5;"></div>
<div class="r" style="left:1385.00px;top:1304.00px;width:3.00px;height:52.00px;background:#f5f5f5;"></div>
<div class="r" style="left:1655.00px;top:1304.00px;width:3.00px;height:52.00px;background:#f5f5f5;"></div>
<div class="r" style="left:1871.00px;top:1304.00px;width:3.00px;height:52.00px;background:#f5f5f5;"></div>
<div class="r" style="left:2069.00px;top:1304.00px;width:3.00px;height:52.00px;background:#f5f5f5;"></div>
<div class="r" style="left:2267.00px;top:1304.00px;width:3.00px;height:52.00px;background:#f5f5f5;"></div>
<div class="r" style="left:2537.00px;top:1304.00px;width:3.00px;height:52.00px;background:#f5f5f5;"></div>
<div class="r" style="left:2753.00px;top:1304.00px;width:3.00px;height:52.00px;background:#f5f5f5;"></div>
<div class="r" style="left:2843.00px;top:1304.00px;width:3.00px;height:52.00px;background:#f5f5f5;"></div>
<div class="r" style="left:3040.00px;top:1304.00px;width:3.00px;height:52.00px;background:#f5f5f5;"></div>
<div class="r" style="left:3329.00px;top:1304.00px;width:3.00px;height:52.00px;background:#f5f5f5;"></div>
<div class="r" style="left:3437.00px;top:1304.00px;width:3.00px;height:52.00px;background:#f5f5f5;"></div>
<div class="r" style="left:3491.00px;top:1304.00px;width:3.00px;height:52.00px;background:#f5f5f5;"></div>
<svg class="r" style="left:204px;top:1316px;" width="32" height="32" viewBox="0 0 32 32"><path d="M7 6 L4.8 6 Q2.8 6 2.8 8 L2.8 25.9 Q2.8 27.9 4.8 27.9 L22.7 27.9 Q24.7 27.9 24.7 25.9 L24.7 23.5" fill="none" stroke="#585858" stroke-width="2"/><rect x="7" y="1.8" width="21.9" height="21.7" rx="2" ry="2" fill="none" stroke="#585858" stroke-width="2"/></svg>
<svg class="r" style="left:290px;top:1317px;" width="28" height="28" viewBox="0 0 28 28"><circle cx="14" cy="14" r="10.2" fill="#8aa63f"/></svg>
<div class="t" style="top:1314.00px;font-size:34.5px;line-height:34.5px;height:34.5px;color:#000;left:347.57px;">Contabilizzata</div>
<div class="t" style="top:1314.00px;font-size:34.5px;line-height:34.5px;height:34.5px;color:#000;left:654.75px;width:150.00px;text-align:right;">37792</div>
<div class="t" style="top:1314.00px;font-size:34.5px;line-height:34.5px;height:34.5px;color:#000;left:821.04px;width:110.00px;text-align:right;">7923</div>
<div class="t" style="top:1314.00px;font-size:34.5px;line-height:34.5px;height:34.5px;color:#000;left:941.91px;width:389.00px;overflow:hidden;">Amazon EU S.Ã  r.l., Succursale Italiana</div>
<div class="t" style="top:1314.00px;font-size:34.5px;line-height:34.5px;height:34.5px;color:#000;left:1336.31px;width:45.50px;overflow:hidden;">IT</div>
<div class="t" style="top:1314.00px;font-size:34.5px;line-height:34.5px;height:34.5px;color:#000;left:1391.62px;">08973230967</div>
<div class="t" style="top:1314.00px;font-size:34.5px;line-height:34.5px;height:34.5px;color:#000;left:1657.22px;width:213.00px;text-align:center;">31/08/2022</div>
<div class="t" style="top:1314.00px;font-size:34.5px;line-height:34.5px;height:34.5px;color:#000;left:1873.22px;width:195.00px;text-align:center;">31/08/2022</div>
<div class="t" style="top:1314.00px;font-size:34.5px;line-height:34.5px;height:34.5px;color:#000;left:2071.22px;width:195.00px;text-align:center;">31/08/2022</div>
<div class="t" style="top:1314.00px;font-size:34.5px;line-height:34.5px;height:34.5px;color:#000;left:2273.61px;">IT22-668211-6</div>
<div class="t" style="top:1314.00px;font-size:34.5px;line-height:34.5px;height:34.5px;color:#000;left:2549.51px;width:200.00px;text-align:right;">155,83</div>
<div class="t" style="top:1314.00px;font-size:34.5px;line-height:34.5px;height:34.5px;color:#000;left:2759.42px;width:80.00px;text-align:right;">5</div>
<div class="t" style="top:1314.00px;font-size:34.5px;line-height:34.5px;height:34.5px;color:#000;left:2853.01px;width:180.00px;text-align:right;">6</div>
<div class="t" style="top:1314.00px;font-size:34.5px;line-height:34.5px;height:34.5px;color:#000;left:3048.41px;width:280.50px;overflow:hidden;">AUTO INVIATA</div>
<div class="t" style="top:1314.00px;font-size:34.5px;line-height:34.5px;height:34.5px;color:#000;left:3335.72px;">TD01</div>
<svg class="r" style="left:3447.2px;top:1316px;" width="32" height="32" viewBox="0 0 32 32"><path d="M7 6 L4.8 6 Q2.8 6 2.8 8 L2.8 25.9 Q2.8 27.9 4.8 27.9 L22.7 27.9 Q24.7 27.9 24.7 25.9 L24.7 23.5" fill="none" stroke="#585858" stroke-width="2"/><rect x="7" y="1.8" width="21.9" height="21.7" rx="2" ry="2" fill="none" stroke="#585858" stroke-width="2"/><path d="M10.5 13.9 L14.7 19.5 L24.9 5.9" fill="none" stroke="#585858" stroke-width="3" stroke-linecap="round" stroke-linejoin="round"/></svg>
<div class="r" style="left:126.00px;top:1357.00px;width:3380.00px;height:54.00px;background:#f4f4f4;"></div>
<svg class="r" style="left:204px;top:1370px;" width="32" height="32" viewBox="0 0 32 32"><path d="M7 6 L4.8 6 Q2.8 6 2.8 8 L2.8 25.9 Q2.8 27.9 4.8 27.9 L22.7 27.9 Q24.7 27.9 24.7 25.9 L24.7 23.5" fill="none" stroke="#585858" stroke-width="2"/><rect x="7" y="1.8" width="21.9" height="21.7" rx="2" ry="2" fill="none" stroke="#585858" stroke-width="2"/></svg>
<svg class="r" style="left:290px;top:1371px;" width="28" height="28" viewBox="0 0 28 28"><circle cx="14" cy="14" r="10.2" fill="#8aa63f"/></svg>
<div class="t" style="top:1368.00px;font-size:34.5px;line-height:34.5px;height:34.5px;color:#000;left:347.57px;">Contabilizzata</div>
<div class="t" style="top:1368.00px;font-size:34.5px;line-height:34.5px;height:34.5px;color:#000;left:654.75px;width:150.00px;text-align:right;">37792</div>
<div class="t" style="top:1368.00px;font-size:34.5px;line-height:34.5px;height:34.5px;color:#000;left:821.04px;width:110.00px;text-align:right;">7923</div>
<div class="t" style="top:1368.00px;font-size:34.5px;line-height:34.5px;height:34.5px;color:#000;left:941.91px;width:389.00px;overflow:hidden;">Amazon EU S.Ã  r.l., Succursale Italiana</div>
<div class="t" style="top:1368.00px;font-size:34.5px;line-height:34.5px;height:34.5px;color:#000;left:1336.31px;width:45.50px;overflow:hidden;">IT</div>
<div class="t" style="top:1368.00px;font-size:34.5px;line-height:34.5px;height:34.5px;color:#000;left:1391.62px;">08973230967</div>
<div class="t" style="top:1368.00px;font-size:34.5px;line-height:34.5px;height:34.5px;color:#000;left:1657.22px;width:213.00px;text-align:center;">30/09/2022</div>
<div class="t" style="top:1368.00px;font-size:34.5px;line-height:34.5px;height:34.5px;color:#000;left:1873.22px;width:195.00px;text-align:center;">30/09/2022</div>
<div class="t" style="top:1368.00px;font-size:34.5px;line-height:34.5px;height:34.5px;color:#000;left:2071.22px;width:195.00px;text-align:center;">30/09/2022</div>
<div class="t" style="top:1368.00px;font-size:34.5px;line-height:34.5px;height:34.5px;color:#000;left:2273.61px;">IT22-668211-7</div>
<div class="t" style="top:1368.00px;font-size:34.5px;line-height:34.5px;height:34.5px;color:#000;left:2548.95px;width:200.00px;text-align:right;">59,84</div>
<div class="t" style="top:1368.00px;font-size:34.5px;line-height:34.5px;height:34.5px;color:#000;left:2759.42px;width:80.00px;text-align:right;">5</div>
<div class="t" style="top:1368.00px;font-size:34.5px;line-height:34.5px;height:34.5px;color:#000;left:2853.27px;width:180.00px;text-align:right;">7</div>
<div class="t" style="top:1368.00px;font-size:34.5px;line-height:34.5px;height:34.5px;color:#000;left:3045.31px;width:280.50px;overflow:hidden;">IN ELABORAZIONE</div>
<div class="t" style="top:1368.00px;font-size:34.5px;line-height:34.5px;height:34.5px;color:#000;left:3335.72px;">TD01</div>
<svg class="r" style="left:3447.2px;top:1370px;" width="32" height="32" viewBox="0 0 32 32"><path d="M7 6 L4.8 6 Q2.8 6 2.8 8 L2.8 25.9 Q2.8 27.9 4.8 27.9 L22.7 27.9 Q24.7 27.9 24.7 25.9 L24.7 23.5" fill="none" stroke="#585858" stroke-width="2"/><rect x="7" y="1.8" width="21.9" height="21.7" rx="2" ry="2" fill="none" stroke="#585858" stroke-width="2"/><path d="M10.5 13.9 L14.7 19.5 L24.9 5.9" fill="none" stroke="#585858" stroke-width="3" stroke-linecap="round" stroke-linejoin="round"/></svg>
<div class="r" style="left:126.00px;top:1411.00px;width:3380.00px;height:54.00px;background:#f4f4f4;"></div>
<div class="r" style="left:126.00px;top:1412.00px;width:3380.00px;height:52.00px;background:#fff;"></div>
<div class="r" style="left:179.00px;top:1412.00px;width:3.00px;height:52.00px;background:#f5f5f5;"></div>
<div class="r" style="left:269.00px;top:1412.00px;width:3.00px;height:52.00px;background:#f5f5f5;"></div>
<div class="r" style="left:341.00px;top:1412.00px;width:3.00px;height:52.00px;background:#f5f5f5;"></div>
<div class="r" style="left:647.00px;top:1412.00px;width:3.00px;height:52.00px;background:#f5f5f5;"></div>
<div class="r" style="left:809.00px;top:1412.00px;width:3.00px;height:52.00px;background:#f5f5f5;"></div>
<div class="r" style="left:935.00px;top:1412.00px;width:3.00px;height:52.00px;background:#f5f5f5;"></div>
<div class="r" style="left:1331.00px;top:1412.00px;width:3.00px;height:52.00px;background:#f5f5f5;"></div>
<div class="r" style="left:1385.00px;top:1412.00px;width:3.00px;height:52.00px;background:#f5f5f5;"></div>
<div class="r" style="left:1655.00px;top:1412.00px;width:3.00px;height:52.00px;background:#f5f5f5;"></div>
<div class="r" style="left:1871.00px;top:1412.00px;width:3.00px;height:52.00px;background:#f5f5f5;"></div>
<div class="r" style="left:2069.00px;top:1412.00px;width:3.00px;height:52.00px;background:#f5f5f5;"></div>
<div class="r" style="left:2267.00px;top:1412.00px;width:3.00px;height:52.00px;background:#f5f5f5;"></div>
<div class="r" style="left:2537.00px;top:1412.00px;width:3.00px;height:52.00px;background:#f5f5f5;"></div>
<div class="r" style="left:2753.00px;top:1412.00px;width:3.00px;height:52.00px;background:#f5f5f5;"></div>
<div class="r" style="left:2843.00px;top:1412.00px;width:3.00px;height:52.00px;background:#f5f5f5;"></div>
<div class="r" style="left:3040.00px;top:1412.00px;width:3.00px;height:52.00px;background:#f5f5f5;"></div>
<div class="r" style="left:3329.00px;top:1412.00px;width:3.00px;height:52.00px;background:#f5f5f5;"></div>
<div class="r" style="left:3437.00px;top:1412.00px;width:3.00px;height:52.00px;background:#f5f5f5;"></div>
<div class="r" style="left:3491.00px;top:1412.00px;width:3.00px;height:52.00px;background:#f5f5f5;"></div>
<div class="r" style="left:126.00px;top:1465.00px;width:3380.00px;height:54.00px;background:#f4f4f4;"></div>
<div class="r" style="left:126.00px;top:1519.00px;width:3380.00px;height:54.00px;background:#f4f4f4;"></div>
<div class="r" style="left:126.00px;top:1520.00px;width:3380.00px;height:52.00px;background:#fff;"></div>
<div class="r" style="left:179.00px;top:1520.00px;width:3.00px;height:52.00px;background:#f5f5f5;"></div>
<div class="r" style="left:269.00px;top:1520.00px;width:3.00px;height:52.00px;background:#f5f5f5;"></div>
<div class="r" style="left:341.00px;top:1520.00px;width:3.00px;height:52.00px;background:#f5f5f5;"></div>
<div class="r" style="left:647.00px;top:1520.00px;width:3.00px;height:52.00px;background:#f5f5f5;"></div>
<div class="r" style="left:809.00px;top:1520.00px;width:3.00px;height:52.00px;background:#f5f5f5;"></div>
<div class="r" style="left:935.00px;top:1520.00px;width:3.00px;height:52.00px;background:#f5f5f5;"></div>
<div class="r" style="left:1331.00px;top:1520.00px;width:3.00px;height:52.00px;background:#f5f5f5;"></div>
<div class="r" style="left:1385.00px;top:1520.00px;width:3.00px;height:52.00px;background:#f5f5f5;"></div>
<div class="r" style="left:1655.00px;top:1520.00px;width:3.00px;height:52.00px;background:#f5f5f5;"></div>
<div class="r" style="left:1871.00px;top:1520.00px;width:3.00px;height:52.00px;background:#f5f5f5;"></div>
<div class="r" style="left:2069.00px;top:1520.00px;width:3.00px;height:52.00px;background:#f5f5f5;"></div>
<div class="r" style="left:2267.00px;top:1520.00px;width:3.00px;height:52.00px;background:#f5f5f5;"></div>
<div class="r" style="left:2537.00px;top:1520.00px;width:3.00px;height:52.00px;background:#f5f5f5;"></div>
<div class="r" style="left:2753.00px;top:1520.00px;width:3.00px;height:52.00px;background:#f5f5f5;"></div>
<div class="r" style="left:2843.00px;top:1520.00px;width:3.00px;height:52.00px;background:#f5f5f5;"></div>
<div class="r" style="left:3040.00px;top:1520.00px;width:3.00px;height:52.00px;background:#f5f5f5;"></div>
<div class="r" style="left:3329.00px;top:1520.00px;width:3.00px;height:52.00px;background:#f5f5f5;"></div>
<div class="r" style="left:3437.00px;top:1520.00px;width:3.00px;height:52.00px;background:#f5f5f5;"></div>
<div class="r" style="left:3491.00px;top:1520.00px;width:3.00px;height:52.00px;background:#f5f5f5;"></div>
<div class="r" style="left:126.00px;top:1573.00px;width:3380.00px;height:6.00px;background:#fff;"></div>
<div class="r" style="left:126.00px;top:1579.00px;width:3376.00px;height:28.00px;background:#efefef;"></div>
<div class="r" style="left:156.00px;top:1583.00px;width:1106.00px;height:20.00px;background:#cbcbcb;border:1px solid #bdbdbd;border-radius:2px;"></div>
<svg class="r" style="left:134px;top:1585px;" width="14" height="18" viewBox="0 0 14 18"><polygon points="11,1.5 11,15.5 2.5,8.5" fill="#8a8a8a"/></svg>
<svg class="r" style="left:3480px;top:1585px;" width="14" height="18" viewBox="0 0 14 18"><polygon points="3,1.5 3,15.5 11.5,8.5" fill="#8a8a8a"/></svg>
<div class="r" style="left:3506.00px;top:654.00px;width:32.00px;height:953.00px;background:#fff;"></div>
<div class="r" style="left:3506.00px;top:656.00px;width:32.00px;height:237.00px;background:#f0f0f0;border:1px solid #e0e0e0;border-right:none;border-radius:4px 0 0 4px;"></div>
<div class="r" style="left:3506.00px;top:894.00px;width:32.00px;height:237.00px;background:#f0f0f0;border:1px solid #e0e0e0;border-right:none;border-radius:4px 0 0 4px;"></div>
<div class="r" style="left:3506.00px;top:1131.00px;width:32.00px;height:238.00px;background:#f0f0f0;border:1px solid #e0e0e0;border-right:none;border-radius:4px 0 0 4px;"></div>
<div class="r" style="left:3506.00px;top:1369.00px;width:32.00px;height:238.00px;background:#f0f0f0;border:1px solid #e0e0e0;border-right:none;border-radius:4px 0 0 4px;"></div>
<svg class="r" style="left:0px;top:0px;" width="3840" height="1858" viewBox="0 0 3840 1858"><polygon points="3513.30,778.90 3528.70,778.90 3521.00,768.50" fill="#8c8c8c" stroke="#8c8c8c" stroke-width="1.2" stroke-linejoin="round"/><polygon points="3514.00,1009.00 3528.00,1009.00 3521.00,1000.00" fill="#8c8c8c" stroke="#8c8c8c" stroke-width="1.2" stroke-linejoin="round"/><polygon points="3514.00,1020.00 3528.00,1020.00 3521.00,1011.00" fill="#8c8c8c" stroke="#8c8c8c" stroke-width="1.2" stroke-linejoin="round"/><polygon points="3514.00,1240.00 3528.00,1240.00 3521.00,1249.00" fill="#8c8c8c" stroke="#8c8c8c" stroke-width="1.2" stroke-linejoin="round"/><polygon points="3514.00,1251.00 3528.00,1251.00 3521.00,1260.00" fill="#8c8c8c" stroke="#8c8c8c" stroke-width="1.2" stroke-linejoin="round"/><polygon points="3513.30,1484.00 3528.70,1484.00 3521.00,1494.40" fill="#8c8c8c" stroke="#8c8c8c" stroke-width="1.2" stroke-linejoin="round"/></svg>
<div class="r" style="left:3564.00px;top:656.00px;width:260.00px;height:106.00px;background:#66a6f6;border-radius:4px;box-shadow:inset 0 -1px 0 rgba(255,255,255,0.55), 0 2.5px 1.5px rgba(0,0,0,0.38);"></div>
<div class="t" style="top:689.67px;font-size:37.6px;line-height:37.6px;height:37.6px;color:#fff;left:3563.92px;width:260.00px;text-align:center;">Seleziona tutto</div>
<div class="r" style="left:3564.00px;top:766.00px;width:260.00px;height:106.00px;background:#66a6f6;border-radius:4px;box-shadow:inset 0 -1px 0 rgba(255,255,255,0.55), 0 2.5px 1.5px rgba(0,0,0,0.38);"></div>
<div class="t" style="top:778.17px;font-size:37.6px;line-height:37.6px;height:37.6px;color:#fff;left:3563.24px;width:260.00px;text-align:center;">Dettaglio</div>
<div class="t" style="top:821.17px;font-size:37.6px;line-height:37.6px;height:37.6px;color:#fff;left:3563.67px;width:260.00px;text-align:center;">fattura</div>
<div class="r" style="left:3564.00px;top:875.50px;width:260.00px;height:106.00px;background:#66a6f6;border-radius:4px;box-shadow:inset 0 -1px 0 rgba(255,255,255,0.55), 0 2.5px 1.5px rgba(0,0,0,0.38);"></div>
<div class="t" style="top:887.67px;font-size:37.6px;line-height:37.6px;height:37.6px;color:#fff;left:3563.14px;width:260.00px;text-align:center;">Stati della</div>
<div class="t" style="top:930.67px;font-size:37.6px;line-height:37.6px;height:37.6px;color:#fff;left:3563.67px;width:260.00px;text-align:center;">fattura</div>
<div class="r" style="left:3564.00px;top:985.00px;width:260.00px;height:106.00px;background:#66a6f6;border-radius:4px;box-shadow:inset 0 -1px 0 rgba(255,255,255,0.55), 0 2.5px 1.5px rgba(0,0,0,0.38);"></div>
<div class="t" style="top:997.17px;font-size:37.6px;line-height:37.6px;height:37.6px;color:#fff;left:3564.72px;width:260.00px;text-align:center;">Variazione</div>
<div class="t" style="top:1040.17px;font-size:37.6px;line-height:37.6px;height:37.6px;color:#fff;left:3562.77px;width:260.00px;text-align:center;">prima nota</div>
<div class="r" style="left:3564.00px;top:1096.00px;width:260.00px;height:106.00px;background:#66a6f6;border-radius:4px;box-shadow:inset 0 -1px 0 rgba(255,255,255,0.55), 0 2.5px 1.5px rgba(0,0,0,0.38);"></div>
<div class="t" style="top:1108.17px;font-size:37.6px;line-height:37.6px;height:37.6px;color:#fff;left:3563.05px;width:260.00px;text-align:center;">Inizio</div>
<div class="t" style="top:1151.17px;font-size:37.6px;line-height:37.6px;height:37.6px;color:#fff;left:3563.91px;width:260.00px;text-align:center;">Anteprima</div>
<div class="r" style="left:3564.00px;top:1206.50px;width:260.00px;height:106.00px;background:#c1c1c1;border-radius:4px;box-shadow:inset 0 -1px 0 rgba(255,255,255,0.55), 0 2.5px 1.5px rgba(0,0,0,0.38);"></div>
<div class="t" style="top:1218.67px;font-size:37.6px;line-height:37.6px;height:37.6px;color:#f2f2f2;left:3563.01px;width:260.00px;text-align:center;">Contabilizza</div>
<div class="t" style="top:1261.67px;font-size:37.6px;line-height:37.6px;height:37.6px;color:#f2f2f2;left:3564.47px;width:260.00px;text-align:center;">dati</div>
<div class="r" style="left:3564.00px;top:1316.50px;width:260.00px;height:106.00px;background:#66a6f6;border-radius:4px;box-shadow:inset 0 -1px 0 rgba(255,255,255,0.55), 0 2.5px 1.5px rgba(0,0,0,0.38);"></div>
<div class="t" style="top:1350.17px;font-size:37.6px;line-height:37.6px;height:37.6px;color:#fff;left:3563.21px;width:260.00px;text-align:center;">Prelievo</div>
<div class="r" style="left:3564.00px;top:1426.00px;width:260.00px;height:106.00px;background:#66a6f6;border-radius:4px;box-shadow:inset 0 -1px 0 rgba(255,255,255,0.55), 0 2.5px 1.5px rgba(0,0,0,0.38);"></div>
<div class="t" style="top:1438.17px;font-size:37.6px;line-height:37.6px;height:37.6px;color:#fff;left:3563.06px;width:260.00px;text-align:center;">Inserimento</div>
<div class="t" style="top:1481.17px;font-size:37.6px;line-height:37.6px;height:37.6px;color:#fff;left:3562.77px;width:260.00px;text-align:center;">prima nota</div>
<div class="r" style="left:3564.00px;top:1535.50px;width:260.00px;height:106.00px;background:#c1c1c1;border-radius:4px;box-shadow:inset 0 -1px 0 rgba(255,255,255,0.55), 0 2.5px 1.5px rgba(0,0,0,0.38);"></div>
<div class="t" style="top:1547.67px;font-size:37.6px;line-height:37.6px;height:37.6px;color:#f2f2f2;left:3563.94px;width:260.00px;text-align:center;">Assegna</div>
<div class="t" style="top:1590.67px;font-size:37.6px;line-height:37.6px;height:37.6px;color:#f2f2f2;left:3564.89px;width:260.00px;text-align:center;">quater/sez.</div>
<div class="r" style="left:80.00px;top:1674.00px;width:3760.00px;height:1.00px;background:#555;"></div>
<div class="r" style="left:94.00px;top:1690.00px;width:260.00px;height:106.00px;background:#66a6f6;border-radius:4px;box-shadow:inset 0 -1px 0 rgba(255,255,255,0.55), 0 2.5px 1.5px rgba(0,0,0,0.38);"></div>
<div class="t" style="top:1723.67px;font-size:37.6px;line-height:37.6px;height:37.6px;color:#fff;left:93.89px;width:260.00px;text-align:center;">Gestione viste</div>
<div class="r" style="left:358.00px;top:1690.00px;width:260.00px;height:106.00px;background:#66a6f6;border-radius:4px;box-shadow:inset 0 -1px 0 rgba(255,255,255,0.55), 0 2.5px 1.5px rgba(0,0,0,0.38);"></div>
<div class="t" style="top:1723.67px;font-size:37.6px;line-height:37.6px;height:37.6px;color:#fff;left:357.15px;width:260.00px;text-align:center;">Stampa griglia</div>
<div class="r" style="left:621.50px;top:1690.00px;width:260.00px;height:106.00px;background:#66a6f6;border-radius:4px;box-shadow:inset 0 -1px 0 rgba(255,255,255,0.55), 0 2.5px 1.5px rgba(0,0,0,0.38);"></div>
<div class="t" style="top:1723.67px;font-size:37.6px;line-height:37.6px;height:37.6px;color:#fff;left:619.92px;width:260.00px;text-align:center;">Export griglia</div>
<div class="r" style="left:886.00px;top:1690.00px;width:260.00px;height:106.00px;background:#c1c1c1;border-radius:4px;box-shadow:inset 0 -1px 0 rgba(255,255,255,0.55), 0 2.5px 1.5px rgba(0,0,0,0.38);"></div>
<div class="t" style="top:1702.17px;font-size:37.6px;line-height:37.6px;height:37.6px;color:#f2f2f2;left:886.72px;width:260.00px;text-align:center;">Variazione</div>
<div class="t" style="top:1745.17px;font-size:37.6px;line-height:37.6px;height:37.6px;color:#f2f2f2;left:885.96px;width:260.00px;text-align:center;">documento</div>
<div class="r" style="left:1150.00px;top:1690.00px;width:260.00px;height:106.00px;background:#c1c1c1;border-radius:4px;box-shadow:inset 0 -1px 0 rgba(255,255,255,0.55), 0 2.5px 1.5px rgba(0,0,0,0.38);"></div>
<div class="t" style="top:1702.17px;font-size:37.6px;line-height:37.6px;height:37.6px;color:#f2f2f2;left:1149.13px;width:260.00px;text-align:center;">Stampa</div>
<div class="t" style="top:1745.17px;font-size:37.6px;line-height:37.6px;height:37.6px;color:#f2f2f2;left:1149.96px;width:260.00px;text-align:center;">documento</div>
<div class="r" style="left:1414.50px;top:1690.00px;width:260.00px;height:106.00px;background:#66a6f6;border-radius:4px;box-shadow:inset 0 -1px 0 rgba(255,255,255,0.55), 0 2.5px 1.5px rgba(0,0,0,0.38);"></div>
<div class="t" style="top:1723.67px;font-size:37.6px;line-height:37.6px;height:37.6px;color:#fff;left:1415.69px;width:260.00px;text-align:center;">Altre funzioni</div>
<div class="r" style="left:3302.00px;top:1690.00px;width:260.00px;height:106.00px;background:#66a6f6;border-radius:4px;box-shadow:inset 0 -1px 0 rgba(255,255,255,0.55), 0 2.5px 1.5px rgba(0,0,0,0.38);"></div>
<div class="t" style="left:3302px;width:260px;text-align:center;top:1724.18px;font-size:37px;line-height:37px;color:#fff;"><span style="text-decoration:underline;text-decoration-thickness:3px;text-underline-offset:3px;">F</span>iltri</div>
<div class="r" style="left:3566.00px;top:1690.00px;width:260.00px;height:106.00px;background:#66a6f6;border-radius:4px;box-shadow:inset 0 -1px 0 rgba(255,255,255,0.55), 0 2.5px 1.5px rgba(0,0,0,0.38);"></div>
<div class="t" style="left:3566px;width:260px;text-align:center;top:1724.18px;font-size:37px;line-height:37px;color:#fff;"><span style="text-decoration:underline;text-decoration-thickness:3px;text-underline-offset:3px;">U</span>scita</div>
<div class="r" style="left:80.00px;top:1806.00px;width:3760.00px;height:12.00px;background:linear-gradient(#b2b2b2,#acacac);"></div>
<div class="r" style="left:0.00px;top:1818.00px;width:3840.00px;height:40.00px;background:#eeeeee;"></div>
<div class="r" style="left:82.00px;top:1823.00px;width:8.50px;height:8.00px;background:#4a4a4a;"></div>
<div class="r" style="left:93.50px;top:1823.00px;width:8.50px;height:8.00px;background:#4a4a4a;"></div>
<div class="r" style="left:105.00px;top:1823.00px;width:8.50px;height:8.00px;background:#4a4a4a;"></div>
<div class="r" style="left:82.00px;top:1834.00px;width:8.50px;height:8.00px;background:#4a4a4a;"></div>
<div class="r" style="left:93.50px;top:1834.00px;width:8.50px;height:8.00px;background:#4a4a4a;"></div>
<div class="r" style="left:105.00px;top:1834.00px;width:8.50px;height:8.00px;background:#4a4a4a;"></div>
<div class="r" style="left:82.00px;top:1845.00px;width:8.50px;height:8.00px;background:#4a4a4a;"></div>
<div class="r" style="left:93.50px;top:1845.00px;width:8.50px;height:8.00px;background:#4a4a4a;"></div>
<div class="r" style="left:105.00px;top:1845.00px;width:8.50px;height:8.00px;background:#4a4a4a;"></div>
<div class="t" style="top:1825.91px;font-size:25.5px;line-height:25.5px;height:25.5px;color:#111;left:139.80px;-webkit-text-stroke:1.1px #111;">start: GAMMA versione: 2022.00.06.a comando: ECONS - EVAGYOFTGR - Contabilizzazione fatture attive - Azienda: 113 A2Z WORLD S.R.L.</div>
<div class="t" style="top:1823.91px;font-size:26.1px;line-height:26.1px;height:26.1px;color:#333;left:3429.12px;width:400.00px;text-align:right;-webkit-text-stroke:1.2px #333;">TeamSystem Experience</div>
<svg class="r" style="left:3340px;top:690px;" width="250" height="160" viewBox="0 0 250 160"><line x1="15.2" y1="145.1" x2="205" y2="33" stroke="#ec1d26" stroke-width="9" stroke-linecap="round"/>
<polygon points="239.3,9 196.6,15 214,43.3" fill="#ec1d26" stroke="#ec1d26" stroke-width="1.5" stroke-linejoin="round"/></svg>
</body></html>
